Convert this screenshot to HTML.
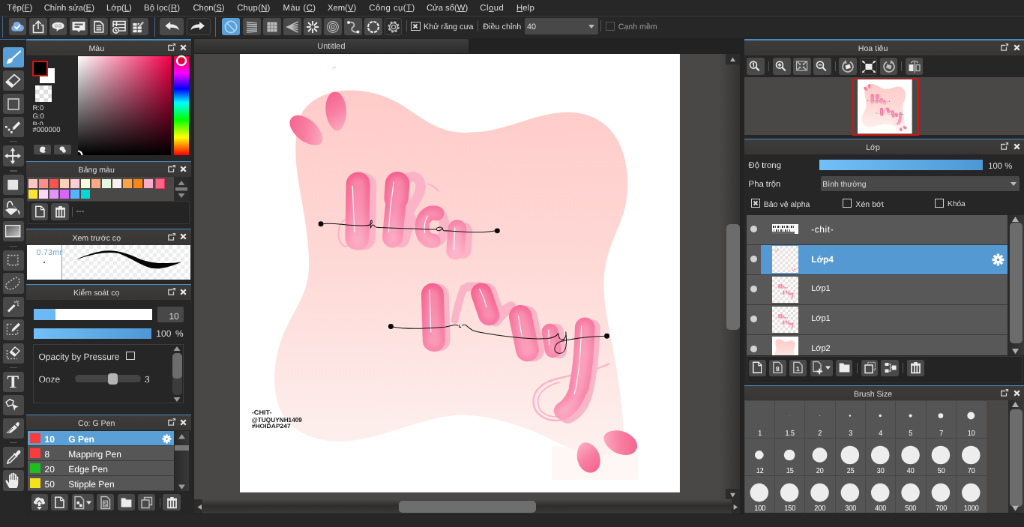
<!DOCTYPE html>
<html lang="vi"><head><meta charset="utf-8"><title>MediBang Paint Pro</title>
<style>
html,body{margin:0;padding:0;background:#252525;overflow:hidden;width:1024px;height:527px}
#app{position:absolute;left:0;top:0;width:1366px;height:703px;transform:scale(0.749633);transform-origin:0 0;will-change:transform;background:#252525;font-family:"Liberation Sans","DejaVu Sans",sans-serif;font-size:11px;color:#dcdcdc;overflow:hidden;text-rendering:geometricPrecision}
#app div{position:absolute;box-sizing:border-box}
#app svg{position:absolute;overflow:visible}
.t{white-space:nowrap;line-height:1}
u{text-decoration:underline}

.btn{background:#494949;border-radius:3px}
.hdr{background:linear-gradient(#3d3c3b,#373635)}
.bl{background:#4a8cc0}
.ic{fill:none;stroke:#e6e6e6;stroke-width:1.5}
.b{font-weight:bold}

</style></head><body>
<div id="app">
<svg width="0" height="0" style="left:0;top:0"><defs>
<linearGradient id="gb" x1="0" y1="0" x2="0" y2="1"><stop offset="0" stop-color="#ffcbc9"/><stop offset="0.45" stop-color="#fed8d5"/><stop offset="1" stop-color="#fdf1ef"/></linearGradient>
<linearGradient id="gp" x1="0" y1="0" x2="1" y2="1"><stop offset="0" stop-color="#f4608c"/><stop offset="1" stop-color="#fb96b2"/></linearGradient>
<linearGradient id="gl" x1="0" y1="0" x2="0" y2="1"><stop offset="0" stop-color="#f4709a"/><stop offset="0.55" stop-color="#f67ea4"/><stop offset="1" stop-color="#fba6c0"/></linearGradient>
<linearGradient id="gl1" gradientUnits="userSpaceOnUse" x1="0" y1="172" x2="0" y2="262"><stop offset="0" stop-color="#f5628f"/><stop offset="0.4" stop-color="#f7769f"/><stop offset="0.75" stop-color="#fa98b6"/><stop offset="1" stop-color="#fcbacd"/></linearGradient>
<linearGradient id="gl2" gradientUnits="userSpaceOnUse" x1="0" y1="283" x2="0" y2="424"><stop offset="0" stop-color="#f5628f"/><stop offset="0.25" stop-color="#f7769f"/><stop offset="0.5" stop-color="#f98aad"/><stop offset="0.8" stop-color="#f985aa"/><stop offset="1" stop-color="#fbaac2"/></linearGradient>
<linearGradient id="gtool" x1="0" y1="0" x2="1" y2="1"><stop offset="0" stop-color="#555"/><stop offset="1" stop-color="#cfcfcf"/></linearGradient>
<linearGradient id="gp2" x1="0.3" y1="0" x2="0.6" y2="1"><stop offset="0" stop-color="#f5648f"/><stop offset="0.5" stop-color="#f87ea2"/><stop offset="1" stop-color="#fbaac0"/></linearGradient>
<filter id="fblur" x="-20%" y="-20%" width="140%" height="140%"><feGaussianBlur stdDeviation="2.2"/></filter>
</defs>
</svg>
<div style="left:0px;top:0px;width:1366px;height:20.81px;background:#272727"></div>
<div class="t" style="left:9.34px;top:6.27px;font-size:11.3px;color:#dedede;letter-spacing:0px">Tệp(<u>F</u>)</div>
<div class="t" style="left:58.7px;top:6.27px;font-size:11.3px;color:#dedede;letter-spacing:0px">Chỉnh sửa(<u>E</u>)</div>
<div class="t" style="left:142.07px;top:6.27px;font-size:11.3px;color:#dedede;letter-spacing:0px">Lớp(<u>L</u>)</div>
<div class="t" style="left:192.09px;top:6.27px;font-size:11.3px;color:#dedede;letter-spacing:0.1px">Bộ lọc(<u>R</u>)</div>
<div class="t" style="left:257.46px;top:6.27px;font-size:11.3px;color:#dedede;letter-spacing:0px">Chọn(<u>S</u>)</div>
<div class="t" style="left:316.15px;top:6.27px;font-size:11.3px;color:#dedede;letter-spacing:0.25px">Chụp(<u>N</u>)</div>
<div class="t" style="left:377.52px;top:6.27px;font-size:11.3px;color:#dedede;letter-spacing:0.45px">Màu (<u>C</u>)</div>
<div class="t" style="left:436.88px;top:6.27px;font-size:11.3px;color:#dedede;letter-spacing:0px">Xem(<u>V</u>)</div>
<div class="t" style="left:492.24px;top:6.27px;font-size:11.3px;color:#dedede;letter-spacing:0.5px">Công cụ(<u>T</u>)</div>
<div class="t" style="left:568.94px;top:6.27px;font-size:11.3px;color:#dedede;letter-spacing:0px">Cửa sổ(<u>W</u>)</div>
<div class="t" style="left:640.31px;top:6.27px;font-size:11.3px;color:#dedede;letter-spacing:0.5px">Cl<u>o</u>ud</div>
<div class="t" style="left:689px;top:6.27px;font-size:11.3px;color:#dedede;letter-spacing:0.2px"><u>H</u>elp</div>
<div style="left:0px;top:20.81px;width:1366px;height:1.07px;background:#3a3a3a"></div>
<div style="left:0px;top:21.88px;width:1366px;height:29.35px;background:#272727"></div>
<div style="left:3.2px;top:22.14px;width:1.2px;height:28.01px;background:#3f6c94"></div>
<div class="btn" style="left:12.01px;top:24.01px;width:23.48px;height:23.48px;"></div>
<div class="btn" style="left:39.09px;top:24.01px;width:23.48px;height:23.48px;"></div>
<div class="btn" style="left:66.03px;top:24.01px;width:23.48px;height:23.48px;"></div>
<div class="btn" style="left:93.11px;top:24.01px;width:23.48px;height:23.48px;"></div>
<div class="btn" style="left:120.06px;top:24.01px;width:23.48px;height:23.48px;"></div>
<div class="btn" style="left:147.14px;top:24.01px;width:23.48px;height:23.48px;"></div>
<div class="btn" style="left:174.08px;top:24.01px;width:23.48px;height:23.48px;"></div>
<div style="left:205.83px;top:23.34px;width:1.2px;height:26.01px;background:#3f6c94"></div>
<div class="btn" style="left:213.44px;top:24.01px;width:32.02px;height:23.48px;"></div>
<div class="btn" style="left:249.46px;top:24.01px;width:31.35px;height:23.48px;background:#2a2a2a;border:1px solid #454545"></div>
<div style="left:287.21px;top:23.34px;width:1.2px;height:26.01px;background:#3f6c94"></div>
<div class="btn" style="left:296.14px;top:24.01px;width:24.01px;height:23.48px;background:#5aa0d8"></div>
<div class="btn" style="left:324.16px;top:24.01px;width:23.48px;height:23.48px;"></div>
<div class="btn" style="left:351.17px;top:24.01px;width:23.48px;height:23.48px;"></div>
<div class="btn" style="left:378.18px;top:24.01px;width:23.48px;height:23.48px;"></div>
<div class="btn" style="left:405.2px;top:24.01px;width:23.48px;height:23.48px;"></div>
<div class="btn" style="left:432.21px;top:24.01px;width:23.48px;height:23.48px;"></div>
<div class="btn" style="left:459.22px;top:24.01px;width:23.48px;height:23.48px;"></div>
<div class="btn" style="left:486.24px;top:24.01px;width:23.48px;height:23.48px;"></div>
<div class="btn" style="left:513.32px;top:24.01px;width:22.94px;height:23.48px;background:#2a2a2a;border:1px solid #454545"></div>
<div style="left:541.6px;top:27.35px;width:1.07px;height:14.67px;background:#555"></div>
<div style="left:548.27px;top:28.68px;width:12.27px;height:12.27px;border:1px solid #d0d0d0"><svg width="12" height="12" viewBox="0 0 12 12" style="left:-1px;top:-1px"><path d="M3.5 3.5L8.5 8.5M8.5 3.5L3.5 8.5" stroke="#e0e0e0" stroke-width="1.8"/></svg></div>
<div class="t" style="left:564.94px;top:30.68px;font-size:10.8px">Khử răng cưa</div>
<div style="left:636.98px;top:27.35px;width:1.07px;height:14.67px;background:#555"></div>
<div class="t" style="left:644.31px;top:30.68px;font-size:10.8px">Điều chỉnh</div>
<div style="left:699.67px;top:24.28px;width:98.05px;height:22.01px;background:#484848;border-radius:2px"></div>
<div class="t" style="left:703.01px;top:30.68px;font-size:10.8px">40</div>
<svg style="left:785.05px;top:32.68px" width="8" height="5" viewBox="0 0 8 5"><path d="M0 0H8L4 5Z" fill="#bdbdbd"/></svg>
<div style="left:801.06px;top:27.35px;width:1.07px;height:14.67px;background:#555"></div>
<div style="left:808.39px;top:29.35px;width:11.47px;height:11.47px;border:1px solid #555"></div>
<div class="t" style="left:824.8px;top:30.68px;font-size:10.6px;color:#9a9a9a">Cạnh mềm</div>
<div style="left:0px;top:52.03px;width:34.02px;height:634.98px;background:#272727"></div>
<div style="left:0px;top:52.29px;width:34.02px;height:1.07px;background:#3f6c94"></div>
<div class="btn" style="left:4px;top:62.7px;width:28.01px;height:27.48px;background:#5aa0d8"></div>
<div class="btn" style="left:4px;top:93.65px;width:28.01px;height:27.48px;"></div>
<div class="btn" style="left:4px;top:124.73px;width:28.01px;height:27.48px;"></div>
<div class="btn" style="left:4px;top:155.68px;width:28.01px;height:27.48px;"></div>
<div class="btn" style="left:4px;top:194.09px;width:28.01px;height:27.48px;"></div>
<div class="btn" style="left:4px;top:232.78px;width:28.01px;height:27.48px;"></div>
<div class="btn" style="left:4px;top:263.73px;width:28.01px;height:27.48px;"></div>
<div class="btn" style="left:4px;top:294.81px;width:28.01px;height:27.48px;"></div>
<div class="btn" style="left:4px;top:333.5px;width:28.01px;height:27.48px;"></div>
<div class="btn" style="left:4px;top:364.44px;width:28.01px;height:27.48px;"></div>
<div class="btn" style="left:4px;top:395.53px;width:28.01px;height:27.48px;"></div>
<div class="btn" style="left:4px;top:426.47px;width:28.01px;height:27.48px;"></div>
<div class="btn" style="left:4px;top:457.82px;width:28.01px;height:27.48px;"></div>
<div class="btn" style="left:4px;top:495.71px;width:28.01px;height:27.48px;"></div>
<div class="btn" style="left:4px;top:526.66px;width:28.01px;height:27.48px;"></div>
<div class="btn" style="left:4px;top:557.87px;width:28.01px;height:27.48px;"></div>
<div class="btn" style="left:4px;top:596.29px;width:28.01px;height:27.48px;"></div>
<div class="btn" style="left:4px;top:627.37px;width:28.01px;height:27.48px;"></div>
<div style="left:13.34px;top:188.09px;width:9.34px;height:1.07px;background:#555"></div>
<div style="left:13.34px;top:227.44px;width:9.34px;height:1.07px;background:#555"></div>
<div style="left:13.34px;top:327.89px;width:9.34px;height:1.07px;background:#555"></div>
<div style="left:13.34px;top:489.97px;width:9.34px;height:1.07px;background:#555"></div>
<div style="left:13.34px;top:590.42px;width:9.34px;height:1.07px;background:#555"></div>
<div style="left:34.95px;top:52.03px;width:219.57px;height:632.31px;background:#262626"></div>
<div class="bl" style="left:34.95px;top:52.43px;width:219.57px;height:1.2px;"></div>
<div class="hdr" style="left:34.95px;top:53.63px;width:219.57px;height:20.28px;"></div>
<div class="t" style="left:48.69px;top:59.9px;width:160.08px;text-align:center;font-size:10.6px;color:#dadada">Màu</div>
<svg style="left:223.58px;top:58.03px" width="10" height="10" viewBox="0 0 10 10"><path d="M6 2.5H0.8V9.2H7.5V5" fill="none" stroke="#cfcfcf" stroke-width="1.3"/><path d="M6.5 0.5H9.5V3.5M9.5 0.5L6.8 3.2" fill="none" stroke="#cfcfcf" stroke-width="1.2"/></svg>
<svg style="left:240.38px;top:58.56px" width="9" height="9" viewBox="0 0 9 9"><path d="M1.2 1.2L7.8 7.8M7.8 1.2L1.2 7.8" fill="none" stroke="#e8e8e8" stroke-width="2.3"/></svg>
<div style="left:52.83px;top:90.71px;width:20.28px;height:20.28px;background:#fff"></div>
<div style="left:42.69px;top:80.57px;width:21.08px;height:21.88px;background:#000;border:2.4px solid #d81414"></div>
<div style="left:46.69px;top:113.92px;width:22.68px;height:22.41px;background:#fff;background-image:linear-gradient(45deg,#dcdcdc 25%,transparent 25%,transparent 75%,#dcdcdc 75%),linear-gradient(45deg,#dcdcdc 25%,transparent 25%,transparent 75%,#dcdcdc 75%);background-size:11.4px 11.4px;background-position:0 0,5.7px 5.7px"></div>
<div class="t" style="left:43.49px;top:140.07px;font-size:9.5px;color:#d8d8d8">R:0</div>
<div class="t" style="left:43.49px;top:151.01px;font-size:9.5px;color:#d8d8d8">G:0</div>
<div class="t" style="left:43.49px;top:161.95px;font-size:9.5px;color:#d8d8d8">B:0</div>
<div class="t" style="left:43.49px;top:166.88px;font-size:9.5px;color:#d8d8d8;background:#262626;padding-top:2.2px">#000000</div>
<div style="left:45.36px;top:193.43px;width:22.68px;height:12.81px;background:#4a4a4a;border-radius:2px"></div>
<div style="left:72.04px;top:193.43px;width:23.34px;height:12.81px;background:#4a4a4a;border-radius:2px"></div>
<div style="left:103.78px;top:74.7px;width:124.59px;height:132.6px;background:linear-gradient(to bottom,rgba(0,0,0,0),#000),linear-gradient(to right,#fff,#f5004a)"></div>
<div style="left:231.85px;top:74.7px;width:20.01px;height:132.6px;background:linear-gradient(to bottom,#ff0030 0%,#ff00ff 17%,#0000ff 33%,#00ffff 47%,#00ff00 64%,#ffff00 82%,#ff8000 91%,#ff0000 100%)"></div>
<svg style="left:234.11px;top:73.37px" width="16" height="16" viewBox="0 0 16 16"><circle cx="8" cy="8" r="6" fill="#e8003c" stroke="#fff" stroke-width="2.4"/></svg>
<svg style="left:103.78px;top:200.36px" width="9" height="9" viewBox="0 0 9 9"><path d="M0 1.5A5.5 5.5 0 0 1 5.5 7" fill="none" stroke="#fff" stroke-width="2.2"/></svg>
<div class="bl" style="left:34.95px;top:214.77px;width:219.57px;height:1.2px;"></div>
<div class="hdr" style="left:34.95px;top:215.97px;width:219.57px;height:20.28px;"></div>
<div class="t" style="left:48.69px;top:222.24px;width:160.08px;text-align:center;font-size:10.6px;color:#dadada">Bảng màu</div>
<svg style="left:223.58px;top:220.37px" width="10" height="10" viewBox="0 0 10 10"><path d="M6 2.5H0.8V9.2H7.5V5" fill="none" stroke="#cfcfcf" stroke-width="1.3"/><path d="M6.5 0.5H9.5V3.5M9.5 0.5L6.8 3.2" fill="none" stroke="#cfcfcf" stroke-width="1.2"/></svg>
<svg style="left:240.38px;top:220.91px" width="9" height="9" viewBox="0 0 9 9"><path d="M1.2 1.2L7.8 7.8M7.8 1.2L1.2 7.8" fill="none" stroke="#e8e8e8" stroke-width="2.3"/></svg>
<div style="left:36.02px;top:236.12px;width:196.1px;height:31.48px;background:#4a4846"></div>
<div style="left:38.42px;top:238.78px;width:12.01px;height:12.01px;background:#ffc6c4"></div>
<div style="left:52.43px;top:238.78px;width:12.01px;height:12.01px;background:#ff8e88"></div>
<div style="left:66.43px;top:238.78px;width:12.01px;height:12.01px;background:#fb5450"></div>
<div style="left:80.44px;top:238.78px;width:12.01px;height:12.01px;background:#ffd3ba"></div>
<div style="left:94.45px;top:238.78px;width:12.01px;height:12.01px;background:#ffcdd6"></div>
<div style="left:108.45px;top:238.78px;width:12.01px;height:12.01px;background:#f9fbdc"></div>
<div style="left:122.46px;top:238.78px;width:12.01px;height:12.01px;background:#ffa888"></div>
<div style="left:136.47px;top:238.78px;width:12.01px;height:12.01px;background:#e2fbe0"></div>
<div style="left:150.47px;top:238.78px;width:12.01px;height:12.01px;background:#fdeeee"></div>
<div style="left:164.48px;top:238.78px;width:12.01px;height:12.01px;background:#ffa444"></div>
<div style="left:178.49px;top:238.78px;width:12.01px;height:12.01px;background:#ff8410"></div>
<div style="left:192.49px;top:238.78px;width:12.01px;height:12.01px;background:#ffaac8"></div>
<div style="left:206.77px;top:238.25px;width:13.34px;height:13.34px;background:#ff6484;border:1.6px solid #ea2c5c"></div>
<div style="left:38.42px;top:253.19px;width:12.01px;height:12.01px;background:#ffe234"></div>
<div style="left:52.43px;top:253.19px;width:12.01px;height:12.01px;background:#fbd8ff"></div>
<div style="left:66.43px;top:253.19px;width:12.01px;height:12.01px;background:#e294f8"></div>
<div style="left:80.44px;top:253.19px;width:12.01px;height:12.01px;background:#d964f8"></div>
<div style="left:94.45px;top:253.19px;width:12.01px;height:12.01px;background:#54b2ff"></div>
<div style="left:108.45px;top:253.19px;width:12.01px;height:12.01px;background:#04d8d6"></div>
<div style="left:232.11px;top:236.12px;width:20.01px;height:31.48px;background:#2b2b2b"></div>
<svg style="left:232.11px;top:236.12px" width="20" height="32" viewBox="0 0 20 32"><path d="M10 5L14.5 11H5.5Z" fill="#8a8a8a"/><rect x="2" y="14" width="16" height="4.5" fill="#7a7a7a"/><path d="M10 28L14.5 22H5.5Z" fill="#8a8a8a"/></svg>
<div style="left:36.68px;top:267.86px;width:216.11px;height:31.22px;border:1px solid #363636;background:#242424"></div>
<div class="btn" style="left:41.62px;top:270.8px;width:22.14px;height:23.48px;"></div>
<div class="btn" style="left:68.3px;top:270.8px;width:23.48px;height:23.48px;"></div>
<div style="left:96.05px;top:276.13px;width:1.07px;height:13.34px;background:#555"></div>
<div class="t" style="left:101.38px;top:276.8px;font-size:11px;color:#bbb">---</div>
<div class="bl" style="left:34.95px;top:305.22px;width:219.57px;height:1.2px;"></div>
<div class="hdr" style="left:34.95px;top:306.42px;width:219.57px;height:20.28px;"></div>
<div class="t" style="left:48.69px;top:312.69px;width:160.08px;text-align:center;font-size:10.6px;color:#dadada">Xem trước cọ</div>
<svg style="left:223.58px;top:310.82px" width="10" height="10" viewBox="0 0 10 10"><path d="M6 2.5H0.8V9.2H7.5V5" fill="none" stroke="#cfcfcf" stroke-width="1.3"/><path d="M6.5 0.5H9.5V3.5M9.5 0.5L6.8 3.2" fill="none" stroke="#cfcfcf" stroke-width="1.2"/></svg>
<svg style="left:240.38px;top:311.35px" width="9" height="9" viewBox="0 0 9 9"><path d="M1.2 1.2L7.8 7.8M7.8 1.2L1.2 7.8" fill="none" stroke="#e8e8e8" stroke-width="2.3"/></svg>
<div style="left:36.02px;top:326.83px;width:217.71px;height:45.89px;background:#fff"></div>
<div style="left:82.17px;top:326.83px;width:171.28px;height:45.89px;background:#fff;background-image:linear-gradient(45deg,#ebebeb 25%,transparent 25%,transparent 75%,#ebebeb 75%),linear-gradient(45deg,#ebebeb 25%,transparent 25%,transparent 75%,#ebebeb 75%);background-size:10.6px 10.6px;background-position:0 0,5.3px 5.3px"></div>
<div style="left:81.64px;top:326.83px;width:1.07px;height:45.89px;background:#999"></div>
<div style="left:36.02px;top:326.83px;width:45.62px;height:45.89px;overflow:hidden"><div class="t" style="left:12.6px;top:5px;font-size:10.5px;color:#6aa6dc;letter-spacing:0.3px">0.73mm</div></div>
<div style="left:57.63px;top:348.7px;width:2.27px;height:2.27px;background:#222;border-radius:50%"></div>
<svg style="left:81.37px;top:325.49px" width="173.42" height="48.02" viewBox="61 244 130 36"><path d="M76 260.2 C88 254.5 99 251.3 109 251 C119 251 129 254.3 140 259.3 C150 263.3 162 264.6 182 262.3 C170 267.3 160 270 152 268.6 C143 266.6 131 258.4 119 253.8 C108 251.8 95 253.6 76 260.2Z" fill="#050505"/></svg>
<div class="bl" style="left:34.95px;top:378.85px;width:219.57px;height:1.2px;"></div>
<div class="hdr" style="left:34.95px;top:380.05px;width:219.57px;height:20.28px;"></div>
<div class="t" style="left:48.69px;top:386.32px;width:160.08px;text-align:center;font-size:10.6px;color:#dadada">Kiểm soát cọ</div>
<svg style="left:223.58px;top:384.45px" width="10" height="10" viewBox="0 0 10 10"><path d="M6 2.5H0.8V9.2H7.5V5" fill="none" stroke="#cfcfcf" stroke-width="1.3"/><path d="M6.5 0.5H9.5V3.5M9.5 0.5L6.8 3.2" fill="none" stroke="#cfcfcf" stroke-width="1.2"/></svg>
<svg style="left:240.38px;top:384.99px" width="9" height="9" viewBox="0 0 9 9"><path d="M1.2 1.2L7.8 7.8M7.8 1.2L1.2 7.8" fill="none" stroke="#e8e8e8" stroke-width="2.3"/></svg>
<div style="left:44.96px;top:412.2px;width:158.21px;height:14.41px;background:#fff"></div>
<div style="left:44.96px;top:412.2px;width:28.81px;height:14.41px;background:#6db9f5"></div>
<div style="left:209.7px;top:409px;width:35.22px;height:20.81px;background:#484848;border-radius:2px"></div>
<div class="t" style="left:209.7px;top:416.47px;width:29.08px;text-align:right;font-size:12px">10</div>
<div style="left:44.96px;top:437.55px;width:156.88px;height:14.14px;background:linear-gradient(to right,#72c0fa,#4d98d4)"></div>
<div class="t" style="left:208.37px;top:439.15px;font-size:12px;word-spacing:2.4px">100 %</div>
<div style="left:44.42px;top:459.42px;width:200.1px;height:78.44px;border:1px solid #3c3c3c"></div>
<div class="t" style="left:51.49px;top:469.96px;font-size:12px">Opacity by Pressure</div>
<div style="left:168.48px;top:469.03px;width:11.21px;height:11.21px;border:1.2px solid #d8d8d8"></div>
<div class="t" style="left:51.49px;top:500.38px;font-size:12px">Ooze</div>
<div style="left:100.32px;top:500.24px;width:88.04px;height:9.87px;background:#444;border-radius:5px"></div>
<div style="left:143.8px;top:498.11px;width:13.34px;height:14.41px;background:#b4b4b4;border-radius:4px"></div>
<div class="t" style="left:192.89px;top:500.38px;font-size:12px">3</div>
<div style="left:229.71px;top:471.43px;width:13.07px;height:55.23px;background:#3c3c3c;border-radius:5px"></div>
<div style="left:229.71px;top:471.43px;width:13.07px;height:33.62px;background:#6c6c6c;border-radius:5px"></div>
<svg style="left:229.18px;top:461.03px" width="14" height="76" viewBox="0 0 14 76"><path d="M7 1L11.5 7H2.5Z" fill="#9a9a9a"/><path d="M7 75L11.5 69H2.5Z" fill="#9a9a9a"/></svg>
<div class="bl" style="left:34.95px;top:552.8px;width:219.57px;height:1.2px;"></div>
<div class="hdr" style="left:34.95px;top:554px;width:219.57px;height:20.28px;"></div>
<div class="t" style="left:48.69px;top:560.27px;width:160.08px;text-align:center;font-size:10.6px;color:#dadada">Cọ: G Pen</div>
<svg style="left:223.58px;top:558.41px" width="10" height="10" viewBox="0 0 10 10"><path d="M6 2.5H0.8V9.2H7.5V5" fill="none" stroke="#cfcfcf" stroke-width="1.3"/><path d="M6.5 0.5H9.5V3.5M9.5 0.5L6.8 3.2" fill="none" stroke="#cfcfcf" stroke-width="1.2"/></svg>
<svg style="left:240.38px;top:558.94px" width="9" height="9" viewBox="0 0 9 9"><path d="M1.2 1.2L7.8 7.8M7.8 1.2L1.2 7.8" fill="none" stroke="#e8e8e8" stroke-width="2.3"/></svg>
<div style="left:36.82px;top:574.95px;width:195.03px;height:80.04px;background:#3c3c3c"></div>
<div style="left:36.82px;top:574.95px;width:195.03px;height:19.34px;background:#5a9fd6"></div>
<div style="left:40.29px;top:578.42px;width:13.34px;height:12.81px;background:#f83c3c"></div>
<div class="t" style="left:59.5px;top:579.88px;font-size:12px;color:#fff;font-weight:bold">10</div>
<div class="t" style="left:91.24px;top:579.88px;font-size:12px;color:#fff;font-weight:bold">G Pen</div>
<div style="left:36.82px;top:594.96px;width:195.03px;height:19.34px;background:#565656"></div>
<div style="left:40.29px;top:598.43px;width:13.34px;height:12.81px;background:#f83c3c"></div>
<div class="t" style="left:59.5px;top:599.89px;font-size:12px;color:#fff">8</div>
<div class="t" style="left:91.24px;top:599.89px;font-size:12px;color:#fff">Mapping Pen</div>
<div style="left:36.82px;top:614.97px;width:195.03px;height:19.34px;background:#565656"></div>
<div style="left:40.29px;top:618.44px;width:13.34px;height:12.81px;background:#1ebe1e"></div>
<div class="t" style="left:59.5px;top:619.9px;font-size:12px;color:#fff">20</div>
<div class="t" style="left:91.24px;top:619.9px;font-size:12px;color:#fff">Edge Pen</div>
<div style="left:36.82px;top:634.98px;width:195.03px;height:19.34px;background:#565656"></div>
<div style="left:40.29px;top:638.44px;width:13.34px;height:12.81px;background:#f5e11e"></div>
<div class="t" style="left:59.5px;top:639.91px;font-size:12px;color:#fff">50</div>
<div class="t" style="left:91.24px;top:639.91px;font-size:12px;color:#fff">Stipple Pen</div>
<svg style="left:215.84px;top:578.55px" width="13" height="13" viewBox="-6.5 -6.5 13 13"><g stroke="#fff" stroke-width="2.6"><path d="M0-6V6M-6 0H6M-4.2-4.2L4.2 4.2M4.2-4.2L-4.2 4.2"/></g><circle r="3.8" fill="#fff"/><circle r="1.3" fill="#5a9fd6"/></svg>
<div style="left:232.91px;top:574.95px;width:19.21px;height:80.04px;background:linear-gradient(to right,#2a2a2a,#383838)"></div>
<div style="left:233.45px;top:594.16px;width:18.14px;height:6.67px;background:#777"></div>
<svg style="left:232.91px;top:575.61px" width="19" height="80" viewBox="0 0 19 80"><path d="M9.5 3L14 9.5H5Z" fill="#9a9a9a"/><path d="M9.5 77L14 70.5H5Z" fill="#9a9a9a"/></svg>
<div class="btn" style="left:41.62px;top:658.99px;width:22.14px;height:22.41px;"></div>
<div class="btn" style="left:68.3px;top:658.99px;width:22.94px;height:22.41px;"></div>
<div class="btn" style="left:95.65px;top:658.99px;width:29.08px;height:22.41px;"></div>
<div class="btn" style="left:129.4px;top:658.99px;width:22.94px;height:22.41px;"></div>
<div class="btn" style="left:156.74px;top:658.99px;width:22.94px;height:22.41px;"></div>
<div class="btn" style="left:183.96px;top:658.99px;width:22.94px;height:22.41px;"></div>
<div class="btn" style="left:217.44px;top:658.99px;width:23.48px;height:22.41px;"></div>
<div style="left:212.5px;top:663.66px;width:1.07px;height:13.34px;background:#555"></div>
<div style="left:258.53px;top:50.69px;width:733.69px;height:634.98px;background:#222222"></div>
<div style="left:258.53px;top:52.03px;width:366.05px;height:19.48px;background:linear-gradient(#3f3e3d,#2c2c2c);border-radius:2px 2px 0 0"></div>
<div class="t" style="left:258.53px;top:56.83px;width:366.85px;text-align:center;font-size:11px;color:#d0d0d0">Untitled</div>
<div style="left:258.53px;top:71.77px;width:709.95px;height:594.42px;background:#4a4846"></div>
<div style="left:959.13px;top:71.77px;width:28.01px;height:594.42px;background:linear-gradient(to right,#4a4846,#403f3d 45%,#333231)"></div>
<div style="left:968.47px;top:71.77px;width:18.68px;height:13.87px;background:#2b2b2b"></div>
<div style="left:968.47px;top:652.32px;width:18.68px;height:14.14px;background:#2b2b2b"></div>
<div style="left:969.01px;top:299.48px;width:17.61px;height:140.74px;background:#6c6c6c;border-radius:5px"></div>
<svg style="left:968.47px;top:72.04px" width="19" height="594.42" viewBox="0 0 19 590" preserveAspectRatio="none"><path d="M9.5 4.5L13 10H6Z" fill="#b0b0b0"/><path d="M9.5 587L13 581.5H6Z" fill="#b0b0b0"/></svg>
<div style="left:258.53px;top:666.46px;width:728.62px;height:18.94px;background:linear-gradient(#4a4846,#2e2d2c 45%,#3a3938)"></div>
<div style="left:975.94px;top:666.46px;width:11.21px;height:18.94px;background:#2b2b2b"></div>
<div style="left:258.53px;top:666.46px;width:11.21px;height:18.94px;background:#2b2b2b"></div>
<div style="left:531.99px;top:667.53px;width:183.29px;height:16.27px;background:#6e6e6e;border-radius:5px"></div>
<svg style="left:258.53px;top:666.46px" width="728.62" height="19" viewBox="0 0 729 19" preserveAspectRatio="none"><path d="M4.5 10.5L10 7V14Z" fill="#b0b0b0"/><path d="M725.5 10.5L720 7V14Z" fill="#b0b0b0"/></svg>
<svg style="left:320.16px;top:72.04px" width="586.95" height="584.82" viewBox="240 54 440 438.4"><rect x="240" y="54" width="440" height="438.4" fill="#fff"/>
<path d="M302 113 C308 102 324 92 344 90.5 C368 89 388 96 405 107 C420 117 436 130 458 132.3 C465 133 472 132.5 478 132 C505 130 528 117 556 113 C585 109 610 120 621 147 C630 170 630 196 622 218 C614 240 604 256 604 285 C604 315 614 345 619 385 C623 415 626 438 620 452 C600 458 575 452 548 438 C525 427 495 416 462 415 C425 416 390 436 350 441 C325 444 296 436 283 415 C272 396 272 366 282 338 C292 312 308 296 309 268 C310 230 298 190 296 160 C295 140 297 124 302 113Z" fill="url(#gb)"/>
<path d="M552 446 L638 452 L638 480 L552 480Z" fill="#fdf1ef" opacity="0.6"/>
<g>
<path d="M0 -1 C0.6 -1 1 -0.5 0.93 0.1 C0.82 0.66 0.36 1 0 1 C-0.36 1 -0.82 0.66 -0.93 0.1 C-1 -0.5 -0.6 -1 0 -1Z" transform="translate(306.5 130.5) rotate(-50) scale(11.5 19.5)" fill="url(#gp2)"/>
<path d="M0 -1 C0.6 -1 1 -0.5 0.93 0.1 C0.82 0.66 0.36 1 0 1 C-0.36 1 -0.82 0.66 -0.93 0.1 C-1 -0.5 -0.6 -1 0 -1Z" transform="translate(336.2 111.4) rotate(-4) scale(11 19.5)" fill="url(#gp2)"/>
<path d="M0 -1 C0.6 -1 1 -0.5 0.93 0.1 C0.82 0.66 0.36 1 0 1 C-0.36 1 -0.82 0.66 -0.93 0.1 C-1 -0.5 -0.6 -1 0 -1Z" transform="translate(588.5 457.5) rotate(162) scale(12 15.5)" fill="url(#gp2)"/>
<path d="M0 -1 C0.6 -1 1 -0.5 0.93 0.1 C0.82 0.66 0.36 1 0 1 C-0.36 1 -0.82 0.66 -0.93 0.1 C-1 -0.5 -0.6 -1 0 -1Z" transform="translate(620.5 442.5) rotate(112) scale(12 17.5)" fill="url(#gp2)"/>
<path d="M332.5 68.2 L336 67" stroke="#f8b0c0" stroke-width="0.8" fill="none"/>
</g>
<g fill="none" stroke-linecap="round" stroke-linejoin="round">
<g stroke="#fab0c6" opacity="0.9">
<path d="M364.5 185 L363.5 238" stroke-width="24"/>
<path d="M346 219 C337 224 336 241 344 246 C349 248 352 243 354 237" stroke-width="1.6"/>
<path d="M404 181 C414 171 425 180 419 194 C415 203 408 211 403 223" stroke-width="10"/>
<path d="M401 239 C403 232 405 226 408 220" stroke-width="17"/>
<path d="M440 213 C447 222 446 237 437 242" stroke-width="10"/>
<path d="M464 231 L463 250" stroke-width="17"/>
<path d="M428 184 C432 185 436 188 438.5 191" stroke-width="1.3"/>
</g>
<g stroke="url(#gl1)">
<path d="M358.2 184 L357.3 238.2" stroke-width="24"/>
<path d="M397.5 184 L396.5 198" stroke-width="24.5"/>
<path d="M396.5 198 C395 212 393.5 225 392.8 237.5" stroke-width="20.5"/>
<path d="M437 213.5 C427.5 210.5 421.8 219.5 422.3 228 C422.8 236.5 427 241.5 433.5 240.8" stroke-width="14.5"/>
<path d="M457.3 229 L455.6 250.5" stroke-width="18.5"/>
</g><g stroke="#ffffff" opacity="0.2" filter="url(#fblur)">
<path d="M358.2 184 L357.3 238.2" stroke-width="14.0"/>
<path d="M397.5 184 L396.5 198" stroke-width="14.5"/>
<path d="M396.5 198 C395 212 393.5 225 392.8 237.5" stroke-width="10.5"/>
<path d="M437 213.5 C427.5 210.5 421.8 219.5 422.3 228 C422.8 236.5 427 241.5 433.5 240.8" stroke-width="4.5"/>
<path d="M457.3 229 L455.6 250.5" stroke-width="8.5"/>
</g>
<g stroke="#fab0c6" opacity="0.9">
<path d="M438 295 L439.5 340" stroke-width="22"/>
<path d="M464 288 C460 298 457 309 455 320" stroke-width="7.5"/>
<path d="M468 287 L480 286.5" stroke-width="9"/>
<path d="M486.5 293.5 L494 315" stroke-width="21"/>
<path d="M496 321 C500 315 505 310 511 307" stroke-width="11"/>
<path d="M526 317 L533 350" stroke-width="23"/>
<path d="M556 331 L559.5 351" stroke-width="15"/>
<path d="M592 328 C591 350 589 375 584 394 C581 404 576 411 568 415" stroke-width="17"/>
<path d="M566 419 C550 424 534 416 533.5 402 C533 389 545 381 560 378 C578 374 596 370 609 364" stroke-width="1.8"/>
<path d="M562 416 C548 419 538 412 538 402 C538 392 548 385 560 382" stroke-width="1.4"/>
</g>
<g stroke="url(#gl2)">
<path d="M432.6 294.5 L434 340.5" stroke-width="22.5"/>
<path d="M481.5 293.5 L489 315" stroke-width="21"/>
<path d="M520.5 316.5 L527.5 350" stroke-width="23"/>
<path d="M550 332 L553 349.5" stroke-width="16.5"/>
<path d="M585 327.5 C584.5 345 583.5 368 579 387" stroke-width="20"/><path d="M579 387 C576 397.5 571 406 563 411" stroke-width="18"/>
</g><g stroke="#ffffff" opacity="0.2" filter="url(#fblur)">
<path d="M432.6 294.5 L434 340.5" stroke-width="12.5"/>
<path d="M481.5 293.5 L489 315" stroke-width="11.0"/>
<path d="M520.5 316.5 L527.5 350" stroke-width="13.0"/>
<path d="M550 332 L553 349.5" stroke-width="6.5"/>
<path d="M585 327.5 C584.5 345 583.5 368 579 387" stroke-width="10.0"/><path d="M579 387 C576 397.5 571 406 563 411" stroke-width="8.0"/>
</g>
<g stroke="#fff" stroke-width="0.9" opacity="0.95">
<path d="M352.6 186 L354.6 232"/><path d="M394 182 C391.5 198 389.5 216 388.8 232"/><path d="M428 216 C424.5 220 424 228 425 233"/><path d="M455 228 L454 249"/>
<path d="M429.6 290 L431 332"/><path d="M479.5 289 C482.5 294 485 301 486.5 307"/><path d="M518.5 316 L522 336"/><path d="M548.6 330 L549.4 345"/><path d="M581.5 326 C581 350 579.5 375 574.5 394"/>
</g>
<g stroke="#111" stroke-width="0.75">
<path d="M321 224 C336 222 350 227 366 225.5 C369 225.5 371 225 372 223 C372.5 220 371 219.5 370.5 222 C370.5 224 370.5 226.5 370.8 228 C371.5 225 373.5 224 374.5 226 C375 227.5 377 227.5 379 227.5 C398 228.5 420 229 436 229.5 C437 227 441 226.5 442.5 228.5 C441 231 437.5 231.5 436.5 229.5 M442.5 228 C442.5 230 443.5 231 446 230.8 C460 231.5 480 234 497 230.5"/>
<path d="M391 326.6 C410 330 430 328 445 327 C452 326 455 324 458 325.5 M459.5 325 C459 327 459.5 327.5 461 327 M462.5 325.5 C463.5 324.5 465.5 324.5 467 326 C470 329 473 331 478 332 C500 336 525 340 548 338.5 C552 338 556 337 558.5 333.5 C559 336 559 339.5 562 340 C565 340 566.5 336 566 332 C566.5 338 567.5 345 565 350 C563 354 558 354.5 555.5 351.5 C553.5 348 556 343 561 341.5 C575 338 592 336.5 607 336"/>
</g>
<g fill="#0a0a0a" stroke="none"><circle cx="321" cy="224" r="2.6"/><circle cx="497.4" cy="230.8" r="2.6"/><circle cx="391" cy="326.5" r="2.6"/><circle cx="607" cy="336" r="2.6"/></g>
</g>
<g font-family="Liberation Sans, sans-serif" font-weight="bold" font-size="6.4" fill="#151515">
<text x="251.8" y="414.8" textLength="20.2" lengthAdjust="spacingAndGlyphs">-CHIT-</text>
<text x="251.8" y="421.9" textLength="50.4" lengthAdjust="spacingAndGlyphs">@TUQUYNH1409</text>
<text x="251.8" y="428.1" textLength="39" lengthAdjust="spacingAndGlyphs" font-size="6">#HOIDAP247</text>
</g>
</svg>
<div style="left:993.02px;top:52.03px;width:372.98px;height:632.31px;background:#262626"></div>
<div class="bl" style="left:993.02px;top:52.43px;width:372.98px;height:1.2px;"></div>
<div class="hdr" style="left:993.02px;top:53.63px;width:372.98px;height:20.28px;"></div>
<div class="t" style="left:1084.53px;top:59.9px;width:160.08px;text-align:center;font-size:10.6px;color:#dadada">Hoa tiêu</div>
<svg style="left:1335.05px;top:58.03px" width="10" height="10" viewBox="0 0 10 10"><path d="M6 2.5H0.8V9.2H7.5V5" fill="none" stroke="#cfcfcf" stroke-width="1.3"/><path d="M6.5 0.5H9.5V3.5M9.5 0.5L6.8 3.2" fill="none" stroke="#cfcfcf" stroke-width="1.2"/></svg>
<svg style="left:1351.86px;top:58.56px" width="9" height="9" viewBox="0 0 9 9"><path d="M1.2 1.2L7.8 7.8M7.8 1.2L1.2 7.8" fill="none" stroke="#e8e8e8" stroke-width="2.3"/></svg>
<div class="btn" style="left:996.49px;top:77.37px;width:24.01px;height:22.94px;"></div>
<div class="btn" style="left:1030.9px;top:77.37px;width:23.74px;height:22.94px;"></div>
<div class="btn" style="left:1057.85px;top:77.37px;width:24.01px;height:22.94px;"></div>
<div class="btn" style="left:1085.33px;top:77.37px;width:23.48px;height:22.94px;"></div>
<div class="btn" style="left:1118.95px;top:77.37px;width:24.28px;height:22.94px;"></div>
<div class="btn" style="left:1146.96px;top:77.37px;width:23.21px;height:22.94px;background:#2a2a2a;border:1px solid #454545"></div>
<div class="btn" style="left:1173.91px;top:77.37px;width:23.21px;height:22.94px;"></div>
<div class="btn" style="left:1208.06px;top:77.37px;width:22.68px;height:22.94px;"></div>
<div style="left:1025.3px;top:82.04px;width:1.07px;height:13.34px;background:#555"></div>
<div style="left:1113.88px;top:82.04px;width:1.07px;height:13.34px;background:#555"></div>
<div style="left:1201.92px;top:82.04px;width:1.07px;height:13.34px;background:#555"></div>
<div style="left:993.02px;top:103.12px;width:372.98px;height:77.37px;background:#4a4846"></div>
<div style="left:1137.09px;top:104.58px;width:89.11px;height:76.57px;border:2.2px solid #d41414"></div>
<svg style="left:1143.22px;top:106.45px" width="74.7" height="72.3" viewBox="240 54 440 438.4"><rect x="240" y="54" width="440" height="438.4" fill="#fff"/>
<path d="M302 113 C308 102 324 92 344 90.5 C368 89 388 96 405 107 C420 117 436 130 458 132.3 C465 133 472 132.5 478 132 C505 130 528 117 556 113 C585 109 610 120 621 147 C630 170 630 196 622 218 C614 240 604 256 604 285 C604 315 614 345 619 385 C623 415 626 438 620 452 C600 458 575 452 548 438 C525 427 495 416 462 415 C425 416 390 436 350 441 C325 444 296 436 283 415 C272 396 272 366 282 338 C292 312 308 296 309 268 C310 230 298 190 296 160 C295 140 297 124 302 113Z" fill="url(#gb)"/>
<path d="M552 446 L638 452 L638 480 L552 480Z" fill="#fdf1ef" opacity="0.6"/>
<g>
<path d="M0 -1 C0.6 -1 1 -0.5 0.93 0.1 C0.82 0.66 0.36 1 0 1 C-0.36 1 -0.82 0.66 -0.93 0.1 C-1 -0.5 -0.6 -1 0 -1Z" transform="translate(306.5 130.5) rotate(-50) scale(11.5 19.5)" fill="url(#gp2)"/>
<path d="M0 -1 C0.6 -1 1 -0.5 0.93 0.1 C0.82 0.66 0.36 1 0 1 C-0.36 1 -0.82 0.66 -0.93 0.1 C-1 -0.5 -0.6 -1 0 -1Z" transform="translate(336.2 111.4) rotate(-4) scale(11 19.5)" fill="url(#gp2)"/>
<path d="M0 -1 C0.6 -1 1 -0.5 0.93 0.1 C0.82 0.66 0.36 1 0 1 C-0.36 1 -0.82 0.66 -0.93 0.1 C-1 -0.5 -0.6 -1 0 -1Z" transform="translate(588.5 457.5) rotate(162) scale(12 15.5)" fill="url(#gp2)"/>
<path d="M0 -1 C0.6 -1 1 -0.5 0.93 0.1 C0.82 0.66 0.36 1 0 1 C-0.36 1 -0.82 0.66 -0.93 0.1 C-1 -0.5 -0.6 -1 0 -1Z" transform="translate(620.5 442.5) rotate(112) scale(12 17.5)" fill="url(#gp2)"/>
<path d="M332.5 68.2 L336 67" stroke="#f8b0c0" stroke-width="0.8" fill="none"/>
</g>
<g fill="none" stroke-linecap="round" stroke-linejoin="round">
<g stroke="#fab0c6" opacity="0.9">
<path d="M364.5 185 L363.5 238" stroke-width="24"/>
<path d="M346 219 C337 224 336 241 344 246 C349 248 352 243 354 237" stroke-width="1.6"/>
<path d="M404 181 C414 171 425 180 419 194 C415 203 408 211 403 223" stroke-width="10"/>
<path d="M401 239 C403 232 405 226 408 220" stroke-width="17"/>
<path d="M440 213 C447 222 446 237 437 242" stroke-width="10"/>
<path d="M464 231 L463 250" stroke-width="17"/>
<path d="M428 184 C432 185 436 188 438.5 191" stroke-width="1.3"/>
</g>
<g stroke="url(#gl1)">
<path d="M358.2 184 L357.3 238.2" stroke-width="24"/>
<path d="M397.5 184 L396.5 198" stroke-width="24.5"/>
<path d="M396.5 198 C395 212 393.5 225 392.8 237.5" stroke-width="20.5"/>
<path d="M437 213.5 C427.5 210.5 421.8 219.5 422.3 228 C422.8 236.5 427 241.5 433.5 240.8" stroke-width="14.5"/>
<path d="M457.3 229 L455.6 250.5" stroke-width="18.5"/>
</g><g stroke="#ffffff" opacity="0.2" filter="url(#fblur)">
<path d="M358.2 184 L357.3 238.2" stroke-width="14.0"/>
<path d="M397.5 184 L396.5 198" stroke-width="14.5"/>
<path d="M396.5 198 C395 212 393.5 225 392.8 237.5" stroke-width="10.5"/>
<path d="M437 213.5 C427.5 210.5 421.8 219.5 422.3 228 C422.8 236.5 427 241.5 433.5 240.8" stroke-width="4.5"/>
<path d="M457.3 229 L455.6 250.5" stroke-width="8.5"/>
</g>
<g stroke="#fab0c6" opacity="0.9">
<path d="M438 295 L439.5 340" stroke-width="22"/>
<path d="M464 288 C460 298 457 309 455 320" stroke-width="7.5"/>
<path d="M468 287 L480 286.5" stroke-width="9"/>
<path d="M486.5 293.5 L494 315" stroke-width="21"/>
<path d="M496 321 C500 315 505 310 511 307" stroke-width="11"/>
<path d="M526 317 L533 350" stroke-width="23"/>
<path d="M556 331 L559.5 351" stroke-width="15"/>
<path d="M592 328 C591 350 589 375 584 394 C581 404 576 411 568 415" stroke-width="17"/>
<path d="M566 419 C550 424 534 416 533.5 402 C533 389 545 381 560 378 C578 374 596 370 609 364" stroke-width="1.8"/>
<path d="M562 416 C548 419 538 412 538 402 C538 392 548 385 560 382" stroke-width="1.4"/>
</g>
<g stroke="url(#gl2)">
<path d="M432.6 294.5 L434 340.5" stroke-width="22.5"/>
<path d="M481.5 293.5 L489 315" stroke-width="21"/>
<path d="M520.5 316.5 L527.5 350" stroke-width="23"/>
<path d="M550 332 L553 349.5" stroke-width="16.5"/>
<path d="M585 327.5 C584.5 345 583.5 368 579 387" stroke-width="20"/><path d="M579 387 C576 397.5 571 406 563 411" stroke-width="18"/>
</g><g stroke="#ffffff" opacity="0.2" filter="url(#fblur)">
<path d="M432.6 294.5 L434 340.5" stroke-width="12.5"/>
<path d="M481.5 293.5 L489 315" stroke-width="11.0"/>
<path d="M520.5 316.5 L527.5 350" stroke-width="13.0"/>
<path d="M550 332 L553 349.5" stroke-width="6.5"/>
<path d="M585 327.5 C584.5 345 583.5 368 579 387" stroke-width="10.0"/><path d="M579 387 C576 397.5 571 406 563 411" stroke-width="8.0"/>
</g>
<g stroke="#fff" stroke-width="0.9" opacity="0.95">
<path d="M352.6 186 L354.6 232"/><path d="M394 182 C391.5 198 389.5 216 388.8 232"/><path d="M428 216 C424.5 220 424 228 425 233"/><path d="M455 228 L454 249"/>
<path d="M429.6 290 L431 332"/><path d="M479.5 289 C482.5 294 485 301 486.5 307"/><path d="M518.5 316 L522 336"/><path d="M548.6 330 L549.4 345"/><path d="M581.5 326 C581 350 579.5 375 574.5 394"/>
</g>
<g stroke="#111" stroke-width="0.75">
<path d="M321 224 C336 222 350 227 366 225.5 C369 225.5 371 225 372 223 C372.5 220 371 219.5 370.5 222 C370.5 224 370.5 226.5 370.8 228 C371.5 225 373.5 224 374.5 226 C375 227.5 377 227.5 379 227.5 C398 228.5 420 229 436 229.5 C437 227 441 226.5 442.5 228.5 C441 231 437.5 231.5 436.5 229.5 M442.5 228 C442.5 230 443.5 231 446 230.8 C460 231.5 480 234 497 230.5"/>
<path d="M391 326.6 C410 330 430 328 445 327 C452 326 455 324 458 325.5 M459.5 325 C459 327 459.5 327.5 461 327 M462.5 325.5 C463.5 324.5 465.5 324.5 467 326 C470 329 473 331 478 332 C500 336 525 340 548 338.5 C552 338 556 337 558.5 333.5 C559 336 559 339.5 562 340 C565 340 566.5 336 566 332 C566.5 338 567.5 345 565 350 C563 354 558 354.5 555.5 351.5 C553.5 348 556 343 561 341.5 C575 338 592 336.5 607 336"/>
</g>
<g fill="#0a0a0a" stroke="none"><circle cx="321" cy="224" r="2.6"/><circle cx="497.4" cy="230.8" r="2.6"/><circle cx="391" cy="326.5" r="2.6"/><circle cx="607" cy="336" r="2.6"/></g>
</g>
</svg>
<div class="bl" style="left:993.02px;top:184.89px;width:372.98px;height:1.2px;"></div>
<div class="hdr" style="left:993.02px;top:186.09px;width:372.98px;height:20.28px;"></div>
<div class="t" style="left:1084.53px;top:192.36px;width:160.08px;text-align:center;font-size:10.6px;color:#dadada">Lớp</div>
<svg style="left:1335.05px;top:190.49px" width="10" height="10" viewBox="0 0 10 10"><path d="M6 2.5H0.8V9.2H7.5V5" fill="none" stroke="#cfcfcf" stroke-width="1.3"/><path d="M6.5 0.5H9.5V3.5M9.5 0.5L6.8 3.2" fill="none" stroke="#cfcfcf" stroke-width="1.2"/></svg>
<svg style="left:1351.86px;top:191.03px" width="9" height="9" viewBox="0 0 9 9"><path d="M1.2 1.2L7.8 7.8M7.8 1.2L1.2 7.8" fill="none" stroke="#e8e8e8" stroke-width="2.3"/></svg>
<div class="t" style="left:998.62px;top:216.37px;font-size:11.3px">Độ trong</div>
<div style="left:1093.07px;top:213.17px;width:218.24px;height:13.87px;background:linear-gradient(to right,#72c0fa,#4d98d4)"></div>
<div class="t" style="left:1318.24px;top:216.64px;font-size:11.3px">100 %</div>
<div class="t" style="left:998.62px;top:241.45px;font-size:11.3px">Pha trộn</div>
<div style="left:1095.2px;top:235.18px;width:265.2px;height:20.01px;background:#484848;border-radius:2px"></div>
<div class="t" style="left:1097.34px;top:241.72px;font-size:10.4px">Bình thường</div>
<svg style="left:1348.12px;top:242.79px" width="8" height="5" viewBox="0 0 8 5"><path d="M0 0H8L4 5Z" fill="#bdbdbd"/></svg>
<div style="left:1001.82px;top:265.46px;width:12.01px;height:12.01px;border:1px solid #d0d0d0"><svg width="12" height="12" viewBox="0 0 12 12" style="left:-1px;top:-1px"><path d="M3.5 3.5L8.5 8.5M8.5 3.5L3.5 8.5" stroke="#e0e0e0" stroke-width="1.8"/></svg></div>
<div class="t" style="left:1018.63px;top:267.86px;font-size:10.6px">Bảo vệ alpha</div>
<div style="left:1124.28px;top:265.46px;width:12.01px;height:12.01px;border:1px solid #d0d0d0"></div>
<div class="t" style="left:1141.36px;top:267.86px;font-size:10.6px">Xén bớt</div>
<div style="left:1247.28px;top:265.46px;width:12.01px;height:12.01px;border:1px solid #d0d0d0"></div>
<div class="t" style="left:1263.95px;top:267.86px;font-size:10.2px">Khóa</div>
<div class="ll" style="left:996.49px;top:286.54px;width:347.64px;height:187.29px;background:#3a3a3a;overflow:hidden"></div>
<div style="left:996.49px;top:286.54px;width:347.64px;height:39.35px;background:#585858"></div>
<div style="left:1000.76px;top:300.95px;width:9.07px;height:9.07px;background:#d2d2d2;border-radius:50%"></div>
<div style="left:1029.84px;top:298.81px;width:34.68px;height:12.81px;background:#fff;overflow:hidden"><div style="left:1px;top:2px;width:28px;height:3px;background:repeating-linear-gradient(90deg,#333 0 2px,#fff 2px 3px,#555 3px 4px,#fff 4px 6px)"></div><div style="left:2px;top:7px;width:22px;height:3px;background:repeating-linear-gradient(90deg,#777 0 1px,#fff 1px 3px,#444 3px 5px,#fff 5px 6px)"></div><div style="left:0;top:10.5px;width:30px;height:3px;background:#666"></div></div>
<div class="t" style="left:1082.13px;top:300.15px;color:#fff;font-size:12px;letter-spacing:0.6px">-chit-</div>
<div style="left:996.49px;top:326.63px;width:347.64px;height:39.35px;background:#585858"></div>
<div style="left:1014.63px;top:326.63px;width:329.49px;height:39.35px;background:#5599d2"></div>
<div style="left:1000.76px;top:341.03px;width:9.07px;height:9.07px;background:#d2d2d2;border-radius:50%"></div>
<div style="left:1029.84px;top:328.49px;width:34.68px;height:35.75px;background-color:#fff;background-image:linear-gradient(45deg,#e6dcdc 25%,transparent 25%,transparent 75%,#e6dcdc 75%),linear-gradient(45deg,#e6dcdc 25%,transparent 25%,transparent 75%,#e6dcdc 75%);background-size:7px 7px;background-position:0 0,3.5px 3.5px;overflow:hidden"><svg width="34.68" height="35.75" viewBox="240 54 440 438.4" style="left:0;top:0;opacity:0.8"><g>
<path d="M0 -1 C0.6 -1 1 -0.5 0.93 0.1 C0.82 0.66 0.36 1 0 1 C-0.36 1 -0.82 0.66 -0.93 0.1 C-1 -0.5 -0.6 -1 0 -1Z" transform="translate(306.5 130.5) rotate(-50) scale(11.5 19.5)" fill="url(#gp2)"/>
<path d="M0 -1 C0.6 -1 1 -0.5 0.93 0.1 C0.82 0.66 0.36 1 0 1 C-0.36 1 -0.82 0.66 -0.93 0.1 C-1 -0.5 -0.6 -1 0 -1Z" transform="translate(336.2 111.4) rotate(-4) scale(11 19.5)" fill="url(#gp2)"/>
<path d="M0 -1 C0.6 -1 1 -0.5 0.93 0.1 C0.82 0.66 0.36 1 0 1 C-0.36 1 -0.82 0.66 -0.93 0.1 C-1 -0.5 -0.6 -1 0 -1Z" transform="translate(588.5 457.5) rotate(162) scale(12 15.5)" fill="url(#gp2)"/>
<path d="M0 -1 C0.6 -1 1 -0.5 0.93 0.1 C0.82 0.66 0.36 1 0 1 C-0.36 1 -0.82 0.66 -0.93 0.1 C-1 -0.5 -0.6 -1 0 -1Z" transform="translate(620.5 442.5) rotate(112) scale(12 17.5)" fill="url(#gp2)"/>
<path d="M332.5 68.2 L336 67" stroke="#f8b0c0" stroke-width="0.8" fill="none"/>
</g>
</svg></div>
<div class="t" style="left:1082.13px;top:340.23px;color:#fff;font-weight:bold;font-size:12px">Lớp4</div>
<div style="left:996.49px;top:366.71px;width:347.64px;height:39.35px;background:#585858"></div>
<div style="left:1000.76px;top:381.12px;width:9.07px;height:9.07px;background:#d2d2d2;border-radius:50%"></div>
<div style="left:1029.84px;top:368.58px;width:34.68px;height:35.75px;background-color:#fff;background-image:linear-gradient(45deg,#e6dcdc 25%,transparent 25%,transparent 75%,#e6dcdc 75%),linear-gradient(45deg,#e6dcdc 25%,transparent 25%,transparent 75%,#e6dcdc 75%);background-size:7px 7px;background-position:0 0,3.5px 3.5px;overflow:hidden"><svg width="34.68" height="35.75" viewBox="240 54 440 438.4" style="left:0;top:0"><g fill="none" stroke-linecap="round" stroke-linejoin="round">
<g stroke="#fab0c6" opacity="0.9">
<path d="M364.5 185 L363.5 238" stroke-width="24"/>
<path d="M346 219 C337 224 336 241 344 246 C349 248 352 243 354 237" stroke-width="1.6"/>
<path d="M404 181 C414 171 425 180 419 194 C415 203 408 211 403 223" stroke-width="10"/>
<path d="M401 239 C403 232 405 226 408 220" stroke-width="17"/>
<path d="M440 213 C447 222 446 237 437 242" stroke-width="10"/>
<path d="M464 231 L463 250" stroke-width="17"/>
<path d="M428 184 C432 185 436 188 438.5 191" stroke-width="1.3"/>
</g>
<g stroke="url(#gl1)">
<path d="M358.2 184 L357.3 238.2" stroke-width="24"/>
<path d="M397.5 184 L396.5 198" stroke-width="24.5"/>
<path d="M396.5 198 C395 212 393.5 225 392.8 237.5" stroke-width="20.5"/>
<path d="M437 213.5 C427.5 210.5 421.8 219.5 422.3 228 C422.8 236.5 427 241.5 433.5 240.8" stroke-width="14.5"/>
<path d="M457.3 229 L455.6 250.5" stroke-width="18.5"/>
</g><g stroke="#ffffff" opacity="0.2" filter="url(#fblur)">
<path d="M358.2 184 L357.3 238.2" stroke-width="14.0"/>
<path d="M397.5 184 L396.5 198" stroke-width="14.5"/>
<path d="M396.5 198 C395 212 393.5 225 392.8 237.5" stroke-width="10.5"/>
<path d="M437 213.5 C427.5 210.5 421.8 219.5 422.3 228 C422.8 236.5 427 241.5 433.5 240.8" stroke-width="4.5"/>
<path d="M457.3 229 L455.6 250.5" stroke-width="8.5"/>
</g>
<g stroke="#fab0c6" opacity="0.9">
<path d="M438 295 L439.5 340" stroke-width="22"/>
<path d="M464 288 C460 298 457 309 455 320" stroke-width="7.5"/>
<path d="M468 287 L480 286.5" stroke-width="9"/>
<path d="M486.5 293.5 L494 315" stroke-width="21"/>
<path d="M496 321 C500 315 505 310 511 307" stroke-width="11"/>
<path d="M526 317 L533 350" stroke-width="23"/>
<path d="M556 331 L559.5 351" stroke-width="15"/>
<path d="M592 328 C591 350 589 375 584 394 C581 404 576 411 568 415" stroke-width="17"/>
<path d="M566 419 C550 424 534 416 533.5 402 C533 389 545 381 560 378 C578 374 596 370 609 364" stroke-width="1.8"/>
<path d="M562 416 C548 419 538 412 538 402 C538 392 548 385 560 382" stroke-width="1.4"/>
</g>
<g stroke="url(#gl2)">
<path d="M432.6 294.5 L434 340.5" stroke-width="22.5"/>
<path d="M481.5 293.5 L489 315" stroke-width="21"/>
<path d="M520.5 316.5 L527.5 350" stroke-width="23"/>
<path d="M550 332 L553 349.5" stroke-width="16.5"/>
<path d="M585 327.5 C584.5 345 583.5 368 579 387" stroke-width="20"/><path d="M579 387 C576 397.5 571 406 563 411" stroke-width="18"/>
</g><g stroke="#ffffff" opacity="0.2" filter="url(#fblur)">
<path d="M432.6 294.5 L434 340.5" stroke-width="12.5"/>
<path d="M481.5 293.5 L489 315" stroke-width="11.0"/>
<path d="M520.5 316.5 L527.5 350" stroke-width="13.0"/>
<path d="M550 332 L553 349.5" stroke-width="6.5"/>
<path d="M585 327.5 C584.5 345 583.5 368 579 387" stroke-width="10.0"/><path d="M579 387 C576 397.5 571 406 563 411" stroke-width="8.0"/>
</g>
<g stroke="#fff" stroke-width="0.9" opacity="0.95">
<path d="M352.6 186 L354.6 232"/><path d="M394 182 C391.5 198 389.5 216 388.8 232"/><path d="M428 216 C424.5 220 424 228 425 233"/><path d="M455 228 L454 249"/>
<path d="M429.6 290 L431 332"/><path d="M479.5 289 C482.5 294 485 301 486.5 307"/><path d="M518.5 316 L522 336"/><path d="M548.6 330 L549.4 345"/><path d="M581.5 326 C581 350 579.5 375 574.5 394"/>
</g>
<g stroke="#111" stroke-width="0.75">
<path d="M321 224 C336 222 350 227 366 225.5 C369 225.5 371 225 372 223 C372.5 220 371 219.5 370.5 222 C370.5 224 370.5 226.5 370.8 228 C371.5 225 373.5 224 374.5 226 C375 227.5 377 227.5 379 227.5 C398 228.5 420 229 436 229.5 C437 227 441 226.5 442.5 228.5 C441 231 437.5 231.5 436.5 229.5 M442.5 228 C442.5 230 443.5 231 446 230.8 C460 231.5 480 234 497 230.5"/>
<path d="M391 326.6 C410 330 430 328 445 327 C452 326 455 324 458 325.5 M459.5 325 C459 327 459.5 327.5 461 327 M462.5 325.5 C463.5 324.5 465.5 324.5 467 326 C470 329 473 331 478 332 C500 336 525 340 548 338.5 C552 338 556 337 558.5 333.5 C559 336 559 339.5 562 340 C565 340 566.5 336 566 332 C566.5 338 567.5 345 565 350 C563 354 558 354.5 555.5 351.5 C553.5 348 556 343 561 341.5 C575 338 592 336.5 607 336"/>
</g>
<g fill="#0a0a0a" stroke="none"><circle cx="321" cy="224" r="2.6"/><circle cx="497.4" cy="230.8" r="2.6"/><circle cx="391" cy="326.5" r="2.6"/><circle cx="607" cy="336" r="2.6"/></g>
</g>
</svg></div>
<div class="t" style="left:1082.13px;top:380.32px;color:#fff;font-size:11px">Lớp1</div>
<div style="left:996.49px;top:406.8px;width:347.64px;height:39.35px;background:#585858"></div>
<div style="left:1000.76px;top:421.21px;width:9.07px;height:9.07px;background:#d2d2d2;border-radius:50%"></div>
<div style="left:1029.84px;top:408.67px;width:34.68px;height:35.75px;background-color:#fff;background-image:linear-gradient(45deg,#e6dcdc 25%,transparent 25%,transparent 75%,#e6dcdc 75%),linear-gradient(45deg,#e6dcdc 25%,transparent 25%,transparent 75%,#e6dcdc 75%);background-size:7px 7px;background-position:0 0,3.5px 3.5px;overflow:hidden"><svg width="34.68" height="35.75" viewBox="240 54 440 438.4" style="left:0;top:0"><g fill="none" stroke-linecap="round" stroke-linejoin="round">
<g stroke="#fab0c6" opacity="0.9">
<path d="M364.5 185 L363.5 238" stroke-width="24"/>
<path d="M346 219 C337 224 336 241 344 246 C349 248 352 243 354 237" stroke-width="1.6"/>
<path d="M404 181 C414 171 425 180 419 194 C415 203 408 211 403 223" stroke-width="10"/>
<path d="M401 239 C403 232 405 226 408 220" stroke-width="17"/>
<path d="M440 213 C447 222 446 237 437 242" stroke-width="10"/>
<path d="M464 231 L463 250" stroke-width="17"/>
<path d="M428 184 C432 185 436 188 438.5 191" stroke-width="1.3"/>
</g>
<g stroke="url(#gl1)">
<path d="M358.2 184 L357.3 238.2" stroke-width="24"/>
<path d="M397.5 184 L396.5 198" stroke-width="24.5"/>
<path d="M396.5 198 C395 212 393.5 225 392.8 237.5" stroke-width="20.5"/>
<path d="M437 213.5 C427.5 210.5 421.8 219.5 422.3 228 C422.8 236.5 427 241.5 433.5 240.8" stroke-width="14.5"/>
<path d="M457.3 229 L455.6 250.5" stroke-width="18.5"/>
</g><g stroke="#ffffff" opacity="0.2" filter="url(#fblur)">
<path d="M358.2 184 L357.3 238.2" stroke-width="14.0"/>
<path d="M397.5 184 L396.5 198" stroke-width="14.5"/>
<path d="M396.5 198 C395 212 393.5 225 392.8 237.5" stroke-width="10.5"/>
<path d="M437 213.5 C427.5 210.5 421.8 219.5 422.3 228 C422.8 236.5 427 241.5 433.5 240.8" stroke-width="4.5"/>
<path d="M457.3 229 L455.6 250.5" stroke-width="8.5"/>
</g>
<g stroke="#fab0c6" opacity="0.9">
<path d="M438 295 L439.5 340" stroke-width="22"/>
<path d="M464 288 C460 298 457 309 455 320" stroke-width="7.5"/>
<path d="M468 287 L480 286.5" stroke-width="9"/>
<path d="M486.5 293.5 L494 315" stroke-width="21"/>
<path d="M496 321 C500 315 505 310 511 307" stroke-width="11"/>
<path d="M526 317 L533 350" stroke-width="23"/>
<path d="M556 331 L559.5 351" stroke-width="15"/>
<path d="M592 328 C591 350 589 375 584 394 C581 404 576 411 568 415" stroke-width="17"/>
<path d="M566 419 C550 424 534 416 533.5 402 C533 389 545 381 560 378 C578 374 596 370 609 364" stroke-width="1.8"/>
<path d="M562 416 C548 419 538 412 538 402 C538 392 548 385 560 382" stroke-width="1.4"/>
</g>
<g stroke="url(#gl2)">
<path d="M432.6 294.5 L434 340.5" stroke-width="22.5"/>
<path d="M481.5 293.5 L489 315" stroke-width="21"/>
<path d="M520.5 316.5 L527.5 350" stroke-width="23"/>
<path d="M550 332 L553 349.5" stroke-width="16.5"/>
<path d="M585 327.5 C584.5 345 583.5 368 579 387" stroke-width="20"/><path d="M579 387 C576 397.5 571 406 563 411" stroke-width="18"/>
</g><g stroke="#ffffff" opacity="0.2" filter="url(#fblur)">
<path d="M432.6 294.5 L434 340.5" stroke-width="12.5"/>
<path d="M481.5 293.5 L489 315" stroke-width="11.0"/>
<path d="M520.5 316.5 L527.5 350" stroke-width="13.0"/>
<path d="M550 332 L553 349.5" stroke-width="6.5"/>
<path d="M585 327.5 C584.5 345 583.5 368 579 387" stroke-width="10.0"/><path d="M579 387 C576 397.5 571 406 563 411" stroke-width="8.0"/>
</g>
<g stroke="#fff" stroke-width="0.9" opacity="0.95">
<path d="M352.6 186 L354.6 232"/><path d="M394 182 C391.5 198 389.5 216 388.8 232"/><path d="M428 216 C424.5 220 424 228 425 233"/><path d="M455 228 L454 249"/>
<path d="M429.6 290 L431 332"/><path d="M479.5 289 C482.5 294 485 301 486.5 307"/><path d="M518.5 316 L522 336"/><path d="M548.6 330 L549.4 345"/><path d="M581.5 326 C581 350 579.5 375 574.5 394"/>
</g>
<g stroke="#111" stroke-width="0.75">
<path d="M321 224 C336 222 350 227 366 225.5 C369 225.5 371 225 372 223 C372.5 220 371 219.5 370.5 222 C370.5 224 370.5 226.5 370.8 228 C371.5 225 373.5 224 374.5 226 C375 227.5 377 227.5 379 227.5 C398 228.5 420 229 436 229.5 C437 227 441 226.5 442.5 228.5 C441 231 437.5 231.5 436.5 229.5 M442.5 228 C442.5 230 443.5 231 446 230.8 C460 231.5 480 234 497 230.5"/>
<path d="M391 326.6 C410 330 430 328 445 327 C452 326 455 324 458 325.5 M459.5 325 C459 327 459.5 327.5 461 327 M462.5 325.5 C463.5 324.5 465.5 324.5 467 326 C470 329 473 331 478 332 C500 336 525 340 548 338.5 C552 338 556 337 558.5 333.5 C559 336 559 339.5 562 340 C565 340 566.5 336 566 332 C566.5 338 567.5 345 565 350 C563 354 558 354.5 555.5 351.5 C553.5 348 556 343 561 341.5 C575 338 592 336.5 607 336"/>
</g>
<g fill="#0a0a0a" stroke="none"><circle cx="321" cy="224" r="2.6"/><circle cx="497.4" cy="230.8" r="2.6"/><circle cx="391" cy="326.5" r="2.6"/><circle cx="607" cy="336" r="2.6"/></g>
</g>
</svg></div>
<div class="t" style="left:1082.13px;top:420.41px;color:#fff;font-size:11px">Lớp1</div>
<div style="left:996.49px;top:446.88px;width:347.64px;height:26.95px;background:#585858"></div>
<div style="left:1000.76px;top:461.29px;width:9.07px;height:9.07px;background:#d2d2d2;border-radius:50%"></div>
<div style="left:1029.84px;top:448.75px;width:34.68px;height:25.08px;background:#fff;overflow:hidden"><svg width="34.68" height="35.75" viewBox="240 54 440 438.4" style="left:0;top:0"><rect x="240" y="54" width="440" height="438.4" fill="#fff"/>
<path d="M302 113 C308 102 324 92 344 90.5 C368 89 388 96 405 107 C420 117 436 130 458 132.3 C465 133 472 132.5 478 132 C505 130 528 117 556 113 C585 109 610 120 621 147 C630 170 630 196 622 218 C614 240 604 256 604 285 C604 315 614 345 619 385 C623 415 626 438 620 452 C600 458 575 452 548 438 C525 427 495 416 462 415 C425 416 390 436 350 441 C325 444 296 436 283 415 C272 396 272 366 282 338 C292 312 308 296 309 268 C310 230 298 190 296 160 C295 140 297 124 302 113Z" fill="url(#gb)"/>
<path d="M552 446 L638 452 L638 480 L552 480Z" fill="#fdf1ef" opacity="0.6"/>
</svg></div>
<div class="t" style="left:1082.13px;top:460.49px;color:#fff;font-size:11px">Lớp2</div>
<svg style="left:1323.05px;top:337.5px" width="17" height="17" viewBox="-7 -7 14 14"><g stroke="#fff" stroke-width="2.8"><path d="M0-6.5V6.5M-6.5 0H6.5M-4.6-4.6L4.6 4.6M4.6-4.6L-4.6 4.6"/></g><circle r="4.2" fill="#fff"/><circle r="1.5" fill="#5599d2"/></svg>
<div style="left:1344.66px;top:286.54px;width:21.34px;height:187.29px;background:linear-gradient(to right,#2a2a2a,#383838)"></div>
<div style="left:1347.32px;top:297.48px;width:16.54px;height:160.08px;background:#6c6c6c;border-radius:5px"></div>
<svg style="left:1345.19px;top:286.54px" width="19" height="187.29" viewBox="0 0 19 187" preserveAspectRatio="none"><path d="M9.5 2L14 9H5Z" fill="#b0b0b0"/><path d="M9.5 185L14 178H5Z" fill="#b0b0b0"/></svg>
<div style="left:995.69px;top:474.9px;width:368.18px;height:35.48px;border:1px solid #363636;background:#242424"></div>
<div class="btn" style="left:999.15px;top:479.7px;width:22.41px;height:22.14px;"></div>
<div class="btn" style="left:1025.83px;top:479.7px;width:22.68px;height:22.14px;"></div>
<div class="btn" style="left:1053.18px;top:479.7px;width:22.94px;height:22.14px;"></div>
<div class="btn" style="left:1080.53px;top:479.7px;width:30.01px;height:22.14px;"></div>
<div class="btn" style="left:1114.81px;top:479.7px;width:22.14px;height:22.14px;"></div>
<div class="btn" style="left:1148.56px;top:479.7px;width:22.68px;height:22.14px;"></div>
<div class="btn" style="left:1175.24px;top:479.7px;width:23.34px;height:22.14px;"></div>
<div class="btn" style="left:1210.46px;top:479.7px;width:22.68px;height:22.14px;"></div>
<div style="left:1142.69px;top:484.24px;width:1.07px;height:13.34px;background:#555"></div>
<div style="left:1204.32px;top:484.24px;width:1.07px;height:13.34px;background:#555"></div>
<div class="bl" style="left:993.02px;top:513.85px;width:372.98px;height:1.2px;"></div>
<div class="hdr" style="left:993.02px;top:515.05px;width:372.98px;height:20.28px;"></div>
<div class="t" style="left:1084.53px;top:521.32px;width:160.08px;text-align:center;font-size:10.6px;color:#dadada">Brush Size</div>
<svg style="left:1335.05px;top:519.45px" width="10" height="10" viewBox="0 0 10 10"><path d="M6 2.5H0.8V9.2H7.5V5" fill="none" stroke="#cfcfcf" stroke-width="1.3"/><path d="M6.5 0.5H9.5V3.5M9.5 0.5L6.8 3.2" fill="none" stroke="#cfcfcf" stroke-width="1.2"/></svg>
<svg style="left:1351.86px;top:519.99px" width="9" height="9" viewBox="0 0 9 9"><path d="M1.2 1.2L7.8 7.8M7.8 1.2L1.2 7.8" fill="none" stroke="#e8e8e8" stroke-width="2.3"/></svg>
<div style="left:993.02px;top:534.13px;width:351.64px;height:149.67px;background:#4a4846"></div>
<div style="left:993.55px;top:534.66px;width:39.49px;height:49.22px;background:#555555"></div>
<div class="t" style="left:993.55px;top:574.01px;width:39.49px;text-align:center;font-size:10.2px;color:#fff;transform:scaleX(0.88)">1</div>
<div style="left:1033.9px;top:534.66px;width:39.49px;height:49.22px;background:#555555"></div>
<div class="t" style="left:1033.9px;top:574.01px;width:39.49px;text-align:center;font-size:10.2px;color:#fff;transform:scaleX(0.88)">1.5</div>
<div style="left:1074.26px;top:534.66px;width:39.49px;height:49.22px;background:#555555"></div>
<div class="t" style="left:1074.26px;top:574.01px;width:39.49px;text-align:center;font-size:10.2px;color:#fff;transform:scaleX(0.88)">2</div>
<div style="left:1114.61px;top:534.66px;width:39.49px;height:49.22px;background:#555555"></div>
<div class="t" style="left:1114.61px;top:574.01px;width:39.49px;text-align:center;font-size:10.2px;color:#fff;transform:scaleX(0.88)">3</div>
<div style="left:1154.96px;top:534.66px;width:39.49px;height:49.22px;background:#555555"></div>
<div class="t" style="left:1154.96px;top:574.01px;width:39.49px;text-align:center;font-size:10.2px;color:#fff;transform:scaleX(0.88)">4</div>
<div style="left:1195.32px;top:534.66px;width:39.49px;height:49.22px;background:#555555"></div>
<div class="t" style="left:1195.32px;top:574.01px;width:39.49px;text-align:center;font-size:10.2px;color:#fff;transform:scaleX(0.88)">5</div>
<div style="left:1235.67px;top:534.66px;width:39.49px;height:49.22px;background:#555555"></div>
<div class="t" style="left:1235.67px;top:574.01px;width:39.49px;text-align:center;font-size:10.2px;color:#fff;transform:scaleX(0.88)">7</div>
<div style="left:1276.02px;top:534.66px;width:39.49px;height:49.22px;background:#555555"></div>
<div class="t" style="left:1276.02px;top:574.01px;width:39.49px;text-align:center;font-size:10.2px;color:#fff;transform:scaleX(0.88)">10</div>
<div style="left:993.55px;top:584.82px;width:39.49px;height:49.22px;background:#555555"></div>
<div class="t" style="left:993.55px;top:624.17px;width:39.49px;text-align:center;font-size:10.2px;color:#fff;transform:scaleX(0.88)">12</div>
<div style="left:1033.9px;top:584.82px;width:39.49px;height:49.22px;background:#555555"></div>
<div class="t" style="left:1033.9px;top:624.17px;width:39.49px;text-align:center;font-size:10.2px;color:#fff;transform:scaleX(0.88)">15</div>
<div style="left:1074.26px;top:584.82px;width:39.49px;height:49.22px;background:#555555"></div>
<div class="t" style="left:1074.26px;top:624.17px;width:39.49px;text-align:center;font-size:10.2px;color:#fff;transform:scaleX(0.88)">20</div>
<div style="left:1114.61px;top:584.82px;width:39.49px;height:49.22px;background:#555555"></div>
<div class="t" style="left:1114.61px;top:624.17px;width:39.49px;text-align:center;font-size:10.2px;color:#fff;transform:scaleX(0.88)">25</div>
<div style="left:1154.96px;top:584.82px;width:39.49px;height:49.22px;background:#555555"></div>
<div class="t" style="left:1154.96px;top:624.17px;width:39.49px;text-align:center;font-size:10.2px;color:#fff;transform:scaleX(0.88)">30</div>
<div style="left:1195.32px;top:584.82px;width:39.49px;height:49.22px;background:#555555"></div>
<div class="t" style="left:1195.32px;top:624.17px;width:39.49px;text-align:center;font-size:10.2px;color:#fff;transform:scaleX(0.88)">40</div>
<div style="left:1235.67px;top:584.82px;width:39.49px;height:49.22px;background:#555555"></div>
<div class="t" style="left:1235.67px;top:624.17px;width:39.49px;text-align:center;font-size:10.2px;color:#fff;transform:scaleX(0.88)">50</div>
<div style="left:1276.02px;top:584.82px;width:39.49px;height:49.22px;background:#555555"></div>
<div class="t" style="left:1276.02px;top:624.17px;width:39.49px;text-align:center;font-size:10.2px;color:#fff;transform:scaleX(0.88)">70</div>
<div style="left:993.55px;top:634.98px;width:39.49px;height:49.22px;background:#555555"></div>
<div class="t" style="left:993.55px;top:674.33px;width:39.49px;text-align:center;font-size:10.2px;color:#fff;transform:scaleX(0.88)">100</div>
<div style="left:1033.9px;top:634.98px;width:39.49px;height:49.22px;background:#555555"></div>
<div class="t" style="left:1033.9px;top:674.33px;width:39.49px;text-align:center;font-size:10.2px;color:#fff;transform:scaleX(0.88)">150</div>
<div style="left:1074.26px;top:634.98px;width:39.49px;height:49.22px;background:#555555"></div>
<div class="t" style="left:1074.26px;top:674.33px;width:39.49px;text-align:center;font-size:10.2px;color:#fff;transform:scaleX(0.88)">200</div>
<div style="left:1114.61px;top:634.98px;width:39.49px;height:49.22px;background:#555555"></div>
<div class="t" style="left:1114.61px;top:674.33px;width:39.49px;text-align:center;font-size:10.2px;color:#fff;transform:scaleX(0.88)">300</div>
<div style="left:1154.96px;top:634.98px;width:39.49px;height:49.22px;background:#555555"></div>
<div class="t" style="left:1154.96px;top:674.33px;width:39.49px;text-align:center;font-size:10.2px;color:#fff;transform:scaleX(0.88)">400</div>
<div style="left:1195.32px;top:634.98px;width:39.49px;height:49.22px;background:#555555"></div>
<div class="t" style="left:1195.32px;top:674.33px;width:39.49px;text-align:center;font-size:10.2px;color:#fff;transform:scaleX(0.88)">500</div>
<div style="left:1235.67px;top:634.98px;width:39.49px;height:49.22px;background:#555555"></div>
<div class="t" style="left:1235.67px;top:674.33px;width:39.49px;text-align:center;font-size:10.2px;color:#fff;transform:scaleX(0.88)">700</div>
<div style="left:1276.02px;top:634.98px;width:39.49px;height:49.22px;background:#555555"></div>
<div class="t" style="left:1276.02px;top:674.33px;width:39.49px;text-align:center;font-size:10.2px;color:#fff;transform:scaleX(0.88)">1000</div>
<svg style="left:992.48px;top:533.59px" width="352.17" height="150.74" viewBox="744 400 264 113"><circle cx="759.60" cy="415.40" r="0.20" fill="#ededed" opacity="0.5"/><circle cx="789.85" cy="415.40" r="0.35" fill="#ededed" opacity="0.5"/><circle cx="820.10" cy="415.40" r="0.60" fill="#ededed" opacity="0.5"/><circle cx="850.35" cy="415.40" r="0.90" fill="#ededed" opacity="1"/><circle cx="880.60" cy="415.40" r="1.30" fill="#ededed" opacity="1"/><circle cx="910.85" cy="415.40" r="1.60" fill="#ededed" opacity="1"/><circle cx="941.10" cy="415.40" r="2.50" fill="#ededed" opacity="1"/><circle cx="971.35" cy="415.40" r="3.70" fill="#ededed" opacity="1"/><circle cx="759.60" cy="454.70" r="4.40" fill="#ededed" opacity="1"/><circle cx="789.85" cy="454.70" r="5.50" fill="#ededed" opacity="1"/><circle cx="820.10" cy="454.70" r="7.50" fill="#ededed" opacity="1"/><circle cx="850.35" cy="454.70" r="9.20" fill="#ededed" opacity="1"/><circle cx="880.60" cy="454.70" r="9.20" fill="#ededed" opacity="1"/><circle cx="910.85" cy="454.70" r="9.20" fill="#ededed" opacity="1"/><circle cx="941.10" cy="454.70" r="9.20" fill="#ededed" opacity="1"/><circle cx="971.35" cy="454.70" r="9.20" fill="#ededed" opacity="1"/><circle cx="759.60" cy="492.30" r="9.20" fill="#ededed" opacity="1"/><circle cx="789.85" cy="492.30" r="9.20" fill="#ededed" opacity="1"/><circle cx="820.10" cy="492.30" r="9.20" fill="#ededed" opacity="1"/><circle cx="850.35" cy="492.30" r="9.20" fill="#ededed" opacity="1"/><circle cx="880.60" cy="492.30" r="9.20" fill="#ededed" opacity="1"/><circle cx="910.85" cy="492.30" r="9.20" fill="#ededed" opacity="1"/><circle cx="941.10" cy="492.30" r="9.20" fill="#ededed" opacity="1"/><circle cx="971.35" cy="492.30" r="9.20" fill="#ededed" opacity="1"/></svg>
<div style="left:1344.66px;top:534.13px;width:21.34px;height:149.67px;background:linear-gradient(to right,#2a2a2a,#383838)"></div>
<div style="left:1347.32px;top:545.6px;width:16.54px;height:130.06px;background:#6c6c6c;border-radius:5px"></div>
<svg style="left:1345.19px;top:534.13px" width="19" height="149.67" viewBox="0 0 19 150" preserveAspectRatio="none"><path d="M9.5 2L14 9H5Z" fill="#b0b0b0"/><path d="M9.5 148L14 141H5Z" fill="#b0b0b0"/></svg>
<div style="left:0px;top:686.47px;width:1366px;height:17.34px;background:#272727"></div>
<svg style="left:12.01px;top:24.01px" width="24" height="24" viewBox="0 0 24 24"><g fill="#7eaee8"><circle cx="10.6" cy="9.9" r="5"/><circle cx="7" cy="13.8" r="3.8"/><circle cx="15.6" cy="13.2" r="4.3"/><rect x="7" y="12" width="8.6" height="5.6"/></g><path d="M7.6 11.6L10.4 14.3L15 8.8" fill="none" stroke="#fff" stroke-width="2"/></svg>
<svg style="left:39.09px;top:24.01px" width="24" height="24" viewBox="0 0 24 24"><path d="M8.5 9.5H5.5V19.5H18.5V9.5H15.5" fill="none" stroke="#ececec" stroke-width="1.6" stroke-width="2"/><path d="M12 15V5M8.5 8L12 4.2L15.5 8" fill="none" stroke="#ececec" stroke-width="1.6" stroke-width="2"/></svg>
<svg style="left:66.03px;top:24.01px" width="24" height="24" viewBox="0 0 24 24"><path d="M11.5 5.8C16 5.8 19.6 7.8 19.6 10.6C19.6 13.4 16.4 15.2 12.4 15.4L9.6 18V15.1C5.8 14.5 3.4 12.8 3.4 10.6C3.4 7.8 7 5.8 11.5 5.8Z" fill="#ececec"/><circle cx="9" cy="10.5" r="1.7" fill="none" stroke="#8a8a8a" stroke-width="0.8"/><circle cx="14" cy="10.5" r="1.7" fill="none" stroke="#8a8a8a" stroke-width="0.8"/></svg>
<svg style="left:93.11px;top:24.01px" width="24" height="24" viewBox="0 0 24 24"><path d="M3.5 5H20.5V16.5H14L12 19L10 16.5H3.5Z" fill="#ececec"/><path d="M6.5 8.5H17.5M6.5 12H13" stroke="#555" stroke-width="1.8"/></svg>
<svg style="left:120.06px;top:24.01px" width="24" height="24" viewBox="0 0 24 24"><path d="M6 4.6H13.6L17.6 8.6V19H6Z" fill="none" stroke="#ececec" stroke-width="1.6"/><path d="M8.5 10.2H15.2M8.5 13H15.2M8.5 15.8H15.2" stroke="#ececec" stroke-width="1.5"/></svg>
<svg style="left:147.14px;top:24.01px" width="24" height="24" viewBox="0 0 24 24"><path d="M4 4.5H20V17H11M4 4.5V12M4 8.5H20M8.5 4.5V11M11 12.8H20" fill="none" stroke="#ececec" stroke-width="1.6" stroke-width="1.4"/><circle cx="7.5" cy="16.5" r="3.6" fill="none" stroke="#ececec" stroke-width="1.6" stroke-width="1.4"/><path d="M7.5 14.5V16.7L9 17.5" fill="none" stroke="#ececec" stroke-width="1.6" stroke-width="1"/></svg>
<svg style="left:174.08px;top:24.01px" width="24" height="24" viewBox="0 0 24 24"><path d="M3.4 7H8.6V10.4H3.4ZM3.4 11.4H8.6V14.8H3.4ZM3.4 15.8H8.6V19.2H3.4ZM9.6 11.4H14.8V14.8H9.6ZM9.6 15.8H14.8V19.2H9.6Z" fill="#ececec"/><path d="M9.6 7H12.5L9.6 10.4Z" fill="#ececec"/><path d="M11 10.8L16.2 4.6L18 6.2L12.8 12.2Z" fill="#c4c4c4"/></svg>
<svg style="left:213.44px;top:24.01px" width="32" height="24" viewBox="0 0 32 24"><path d="M7.3 10.5L14.2 5V8.3C20.5 8.3 24.8 11 26 16.2C23 13.6 19.2 12.7 14.2 12.9V16Z" fill="#ececec"/></svg>
<svg style="left:249.46px;top:24.01px" width="32" height="24" viewBox="0 0 32 24"><path d="M24 10.5L17.1 5V8.3C10.8 8.3 6.5 11 5.3 16.2C8.3 13.6 12.1 12.7 17.1 12.9V16Z" fill="#ececec"/></svg>
<svg style="left:296.14px;top:24.01px" width="24" height="24" viewBox="0 0 24 24"><circle cx="12" cy="12" r="7.6" fill="none" stroke="#a9d2f5" stroke-width="1.8"/><path d="M6.6 6.6L17.4 17.4" stroke="#a9d2f5" stroke-width="1.8"/></svg>
<svg style="left:324.16px;top:24.01px" width="24" height="24" viewBox="0 0 24 24"><path d="M5 5.5L19 6.8M5 8.2L19 9M5 11L19 11.3M5 13.8L19 13.5M5 16.5L19 15.8M5 19.2L19 18" stroke="#bdbdbd" stroke-width="1.3"/></svg>
<svg style="left:351.1px;top:24.01px" width="24" height="24" viewBox="0 0 24 24"><path d="M5.5 5.5H18.5V18.5H5.5Z" fill="#bdbdbd"/><path d="M9.8 5V19M14.2 5V19M5 9.8H19M5 14.2H19" stroke="#7c7c7c" stroke-width="1"/></svg>
<svg style="left:378.18px;top:24.01px" width="24" height="24" viewBox="0 0 24 24"><path d="M19.5 5L5 12L19.5 19M5 12L19.5 8.5M5 12H19.5M5 12L19.5 15.5" fill="none" stroke="#bdbdbd" stroke-width="1.5"/></svg>
<svg style="left:405.13px;top:24.01px" width="24" height="24" viewBox="0 0 24 24"><path d="M12 4V20M4 12H20M6 6L18 18M18 6L6 18" stroke="#ececec" stroke-width="1.9"/><circle cx="12" cy="12" r="2.6" fill="#494949"/></svg>
<svg style="left:432.21px;top:24.01px" width="24" height="24" viewBox="0 0 24 24"><circle cx="12" cy="12" r="2" fill="none" stroke="#bdbdbd" stroke-width="1.1"/><circle cx="12" cy="12" r="4.6" fill="none" stroke="#bdbdbd" stroke-width="1.1"/><circle cx="12" cy="12" r="7.4" fill="none" stroke="#bdbdbd" stroke-width="1.1"/></svg>
<svg style="left:459.16px;top:24.01px" width="24" height="24" viewBox="0 0 24 24"><path d="M6 6C14 4 15 10 11.5 12.5C8 15 12 20 18.5 18.5" fill="none" stroke="#bdbdbd" stroke-width="1.8"/><circle cx="6" cy="6" r="2" fill="#ececec"/><circle cx="18.5" cy="18.5" r="2" fill="#ececec"/></svg>
<svg style="left:486.24px;top:24.01px" width="24" height="24" viewBox="0 0 24 24"><circle cx="12" cy="12" r="7" fill="none" stroke="#ececec" stroke-width="2.2" stroke-dasharray="4.2 1.3"/></svg>
<svg style="left:513.32px;top:24.01px" width="24" height="24" viewBox="0 0 24 24"><circle cx="12" cy="12" r="6.4" fill="none" stroke="#bdbdbd" stroke-width="2.6" stroke-dasharray="2.6 2.43"/><circle cx="12" cy="12" r="5.4" fill="none" stroke="#bdbdbd" stroke-width="1.5"/><circle cx="12" cy="12" r="2.6" fill="none" stroke="#bdbdbd" stroke-width="1.3"/></svg>
<svg style="left:4px;top:62.7px" width="28" height="28" viewBox="0 0 28 28"><path d="M23 5.5L12 15.5" stroke="#fff" stroke-width="2.2" stroke-linecap="round"/><path d="M12.8 17C12.8 20 9.5 22.5 4.5 21.5C6 20.5 5.5 18 7 16.2C8.8 14.2 12.8 14.5 12.8 17Z" fill="#fff"/></svg>
<svg style="left:4px;top:93.65px" width="28" height="28" viewBox="0 0 28 28"><path d="M15 5.6L22.6 11.9L11.8 22L4.2 15.7Z" fill="none" stroke="#ececec" stroke-width="1.7" stroke-linejoin="round"/><path d="M4.2 15.7L11.8 22L14.6 19.4L7 13Z" fill="#ececec"/></svg>
<svg style="left:4px;top:124.73px" width="28" height="28" viewBox="0 0 28 28"><rect x="7" y="7" width="14" height="14" fill="none" stroke="#bdbdbd" stroke-width="1.8"/></svg>
<svg style="left:4px;top:155.68px" width="28" height="28" viewBox="0 0 28 28"><path d="M22 7.5L14 15.5" stroke="#ececec" stroke-width="3.6"/><path d="M14.8 12.2L17.3 14.7L12.2 17.8Z" fill="#ececec"/><rect x="3" y="12" width="2.7" height="2.7" fill="#ececec"/><rect x="6.7" y="15.7" width="2.7" height="2.7" fill="#ececec"/><rect x="10" y="19" width="2.7" height="2.7" fill="#ececec"/></svg>
<svg style="left:4px;top:194.09px" width="28" height="28" viewBox="0 0 28 28"><path d="M13 5V23M4 14H22" stroke="#ececec" stroke-width="1.8"/><path d="M13 3L16.2 7.5H9.8ZM13 25L16.2 20.5H9.8ZM2 14L6.5 10.8V17.2ZM24 14L19.5 10.8V17.2Z" fill="#ececec"/></svg>
<svg style="left:4px;top:232.78px" width="28" height="28" viewBox="0 0 28 28"><rect x="6.3" y="6.8" width="13.8" height="13.4" fill="#e6e6e6"/></svg>
<svg style="left:4px;top:263.73px" width="28" height="28" viewBox="0 0 28 28"><path d="M3 15.9L15 10.5L19.4 15.9L10.6 23Z" fill="#ececec"/><path d="M6 13.8L14.6 10.3L17.6 14.5Z" fill="#5a5a5a"/><path d="M6 13C4.5 7 9 2.5 11 5.5C12 7 12.6 8.5 13 10" fill="none" stroke="#ececec" stroke-width="1.6"/><path d="M19.4 15.9C22.5 16.5 23 20 22 22.6C20.5 21 20 18 19.4 15.9Z" fill="#ececec"/></svg>
<svg style="left:4px;top:294.81px" width="28" height="28" viewBox="0 0 28 28"><rect x="3.6" y="5.6" width="19.2" height="15.2" fill="url(#gtool)" stroke="#ececec" stroke-width="1.3"/></svg>
<svg style="left:4px;top:333.5px" width="28" height="28" viewBox="0 0 28 28"><rect x="6.6" y="6.6" width="13.2" height="13" fill="none" stroke="#bdbdbd" stroke-width="1.6" stroke-dasharray="2 2"/></svg>
<svg style="left:4px;top:364.44px" width="28" height="28" viewBox="0 0 28 28"><path d="M4.5 19.5C1.5 15.5 7 12.5 10.5 10.5C14 8.5 17 4.5 20.5 7.5C24 11 20.5 16.5 16 19.5C11.5 22.5 7 22.5 4.5 19.5Z" fill="none" stroke="#bdbdbd" stroke-width="1.6" stroke-dasharray="2 2"/></svg>
<svg style="left:4px;top:395.53px" width="28" height="28" viewBox="0 0 28 28"><path d="M7 19.5L15.5 11" stroke="#ececec" stroke-width="3"/><path d="M17.8 4.5V7.5M21.5 9H18.8M21 5.5L19 7.5M15 5.8L16.5 7.8M21 12L19 10.5" stroke="#bdbdbd" stroke-width="1.2"/></svg>
<svg style="left:4px;top:426.47px" width="28" height="28" viewBox="0 0 28 28"><path d="M5.5 6.5H13M5.5 6.5V20H19.5V14" fill="none" stroke="#bdbdbd" stroke-width="1.6" stroke-dasharray="2 2"/><path d="M21.8 6L13.5 14.2" stroke="#ececec" stroke-width="3.2"/><path d="M11.5 16.5L12.3 13L14.8 15.5Z" fill="#ececec"/></svg>
<svg style="left:4px;top:457.82px" width="28" height="28" viewBox="0 0 28 28"><path d="M5.5 9V20.5H19" fill="none" stroke="#bdbdbd" stroke-width="1.6" stroke-dasharray="2 2"/><path d="M16 5L22 10L15.5 17L9.5 12Z" fill="none" stroke="#ececec" stroke-width="1.5" stroke-linejoin="round"/><path d="M9.5 12L15.5 17L17.6 14.8L11.6 9.8Z" fill="#ececec"/></svg>
<svg style="left:4px;top:495.71px" width="28" height="28" viewBox="0 0 28 28"><text x="13.4" y="20.8" text-anchor="middle" font-family="Liberation Serif, serif" font-weight="bold" font-size="23.5" fill="#ececec">T</text></svg>
<svg style="left:4px;top:526.66px" width="28" height="28" viewBox="0 0 28 28"><path d="M4 9.5L9 5.7L14 8L13 13L7 15Z" fill="none" stroke="#ececec" stroke-width="1.5"/><path d="M12 11.5L20.6 15.8L16.6 17L15.4 21Z" fill="#ececec"/></svg>
<svg style="left:4px;top:557.87px" width="28" height="28" viewBox="0 0 28 28"><path d="M4.5 19.5L15.5 9L19 12.5L10.5 19.5Z" fill="#ececec"/><path d="M16.5 8L18.7 5.8C20.3 4.3 23 6.8 21.5 8.5L20 11.5Z" fill="#ececec"/><path d="M7 18.5L13 13" stroke="#494949" stroke-width="1"/></svg>
<svg style="left:4px;top:596.29px" width="28" height="28" viewBox="0 0 28 28"><path d="M6 22L7 18.5L15.5 10L18 12.5L9.5 21Z" fill="none" stroke="#ececec" stroke-width="1.7"/><path d="M14.5 8.5L19.5 13.5M16.5 10.5L20 6C21.5 4.5 23.7 6.6 22.2 8.2L18.2 12Z" fill="#ececec" stroke="#ececec" stroke-width="1.6"/></svg>
<svg style="left:4px;top:627.37px" width="28" height="28" viewBox="0 0 28 28"><path d="M8.5 24C6.5 21 4.5 17.5 3.5 15C3.2 13.5 5 13 6 14.5L8 17.5V7.5C8 5.8 10.4 5.8 10.4 7.5V5.5C10.4 3.8 12.9 3.8 12.9 5.5V5C12.9 3.3 15.4 3.3 15.4 5V6.5C15.4 4.8 17.9 4.8 17.9 6.5V9.5C17.9 8 20.3 8 20.3 9.5V17C20.3 20 19.5 22 18.5 24Z" fill="#ececec"/><path d="M10.4 7.5V13M12.9 5.5V13M15.4 6.5V13M17.9 9.5V13.5" stroke="#494949" stroke-width="0.9"/></svg>
<svg style="left:45.36px;top:193.43px" width="23" height="13" viewBox="0 0 23 13"><path d="M11.5 2.5C15 2.5 16.5 5 15 6.5C13.5 7.5 15 9 16 9.5C14.5 11.5 8 11.5 8 7C8 4.5 9.5 2.5 11.5 2.5Z" fill="#ececec"/></svg>
<svg style="left:72.3px;top:193.43px" width="23" height="13" viewBox="0 0 23 13"><path d="M10 2.5C13 2 15 4 14 6C16.5 6.5 16.5 10.5 13.5 10.8C12 11 10.5 9.5 11 8C9 8.5 7 6.5 7.6 4.6C8 3.4 9 2.7 10 2.5Z" fill="#ececec"/></svg>
<svg style="left:41.62px;top:271.2px" width="23" height="23" viewBox="0 0 23 23"><path d="M5.8 4.2H13L17 8.2V18.2H5.8Z" fill="none" stroke="#ececec" stroke-width="1.5"/><path d="M12.6 4.2V8.6H17" fill="none" stroke="#ececec" stroke-width="1.1"/></svg>
<svg style="left:68.7px;top:271.2px" width="23" height="23" viewBox="0 0 23 23"><path d="M6 7.8H17V18.4H6Z" fill="none" stroke="#ececec" stroke-width="1.7"/><path d="M9.7 7.8V18M13.3 7.8V18" stroke="#ececec" stroke-width="1.6"/><path d="M5 6.6H18M9.3 4.8H13.7" stroke="#ececec" stroke-width="1.7"/></svg>
<svg style="left:41.35px;top:658.59px" width="23" height="23" viewBox="0 0 23 23"><path d="M7 13.5C3.5 13.5 3 9.5 6 8.5C6 4.5 11 3 13 6C16.5 4.5 19 8 17.5 10C20 10.5 19.5 13.5 17 13.5H14.5V11L11.5 8L8.5 11V13.5Z" fill="#ececec"/><path d="M11.5 9.5L15 13.5H13V16H10V13.5H8ZM11.5 21L8 17H15Z" fill="#ececec"/></svg>
<svg style="left:68.43px;top:658.59px" width="23" height="23" viewBox="0 0 23 23"><path d="M5.8 4.2H13L17 8.2V18.2H5.8Z" fill="none" stroke="#ececec" stroke-width="1.5"/><path d="M12.6 4.2V8.6H17" fill="none" stroke="#ececec" stroke-width="1.1"/></svg>
<svg style="left:95.65px;top:658.59px" width="30" height="23" viewBox="0 0 (30, 23) (30, 23)"><path d="M4 3.5H11.5L15.5 7.5V19.5H4Z" fill="none" stroke="#bdbdbd" stroke-width="1.5"/><path d="M6.5 10H10V13.5H6.5ZM10 13.5H13.5V17H10Z" fill="#ececec"/><path d="M19 9.5H26L22.5 14Z" fill="#ececec"/></svg>
<svg style="left:129.4px;top:658.59px" width="23" height="23" viewBox="0 0 23 23"><path d="M6 3.5H13.5L17.5 7.5V19.5H6Z" fill="none" stroke="#bdbdbd" stroke-width="1.5"/><path d="M8.5 9H14.5V17H8.5Z" fill="none" stroke="#bdbdbd" stroke-width="1.1"/><text x="11.5" y="16" text-anchor="middle" font-size="8" font-weight="bold" fill="#bdbdbd" font-family="Liberation Sans, sans-serif">S</text></svg>
<svg style="left:156.74px;top:658.59px" width="23" height="23" viewBox="0 0 23 23"><path d="M4.6 5.6H10L11.4 7.4H18.4V17.6H4.6Z" fill="#ececec"/></svg>
<svg style="left:183.96px;top:658.59px" width="23" height="23" viewBox="0 0 23 23"><path d="M8.5 4.5H18.5V14.5H8.5Z" fill="none" stroke="#bdbdbd" stroke-width="1.4"/><path d="M5 8H15V18.5H5Z" fill="#494949" stroke="#bdbdbd" stroke-width="1.4"/></svg>
<svg style="left:217.71px;top:658.59px" width="23" height="23" viewBox="0 0 23 23"><path d="M6 7.8H17V18.4H6Z" fill="none" stroke="#ececec" stroke-width="1.7"/><path d="M9.7 7.8V18M13.3 7.8V18" stroke="#ececec" stroke-width="1.6"/><path d="M5 6.6H18M9.3 4.8H13.7" stroke="#ececec" stroke-width="1.7"/></svg>
<svg style="left:996.49px;top:77.37px" width="24" height="24" viewBox="0 0 24 24"><circle cx="9" cy="9.6" r="4.5" fill="none" stroke="#ececec" stroke-width="1.6"/><path d="M12.4 13L16.8 17.2" stroke="#ececec" stroke-width="2.2"/><path d="M8 8.3L9.4 7.4V12" fill="none" stroke="#ececec" stroke-width="1.3"/></svg>
<svg style="left:1030.9px;top:77.37px" width="24" height="24" viewBox="0 0 24 24"><circle cx="9" cy="9.6" r="4.5" fill="none" stroke="#ececec" stroke-width="1.6"/><path d="M12.4 13L16.8 17.2" stroke="#ececec" stroke-width="2.2"/><path d="M6.8 9.6H11.2M9 7.4V11.8" stroke="#ececec" stroke-width="1.6"/></svg>
<svg style="left:1057.85px;top:77.37px" width="24" height="24" viewBox="0 0 24 24"><rect x="4.6" y="4.8" width="14" height="12" fill="none" stroke="#bdbdbd" stroke-width="1.2"/><path d="M5.5 5.5L9.5 9M17.5 5.5L13.5 9M5.5 16L9.5 12.6M17.5 16L13.5 12.6" stroke="#bdbdbd" stroke-width="1.4"/><path d="M10.3 7V9.8H7.5ZM12.8 7V9.8H15.6ZM10.3 14.6V11.8H7.5ZM12.8 14.6V11.8H15.6Z" fill="#bdbdbd"/></svg>
<svg style="left:1085.33px;top:77.37px" width="24" height="24" viewBox="0 0 24 24"><circle cx="9" cy="9.6" r="4.5" fill="none" stroke="#ececec" stroke-width="1.6"/><path d="M12.4 13L16.8 17.2" stroke="#ececec" stroke-width="2.2"/><path d="M6.8 9.6H11.2" stroke="#ececec" stroke-width="1.6"/></svg>
<svg style="left:1118.95px;top:77.37px" width="24" height="24" viewBox="0 0 24 24"><path d="M7.5 6.5A7 7 0 1 0 15 5.6" fill="none" stroke="#bdbdbd" stroke-width="1.8"/><path d="M9.5 3L6 6.5L10.5 8.2Z" fill="#bdbdbd"/><path d="M8.5 10.5L14.5 8.5L16 13.5L10 15.5Z" fill="#ececec"/></svg>
<svg style="left:1146.96px;top:77.37px" width="24" height="24" viewBox="0 0 24 24"><rect x="7.5" y="8" width="9" height="8" fill="#ececec"/><path d="M3.5 4.5L7 7.5M20.5 4.5L17 7.5M3.5 19.5L7 16.5M20.5 19.5L17 16.5" stroke="#ececec" stroke-width="1.5"/><path d="M3 4L6.5 4.5L4 7ZM21 4L17.5 4.5L20 7ZM3 20L6.5 19.5L4 17ZM21 20L17.5 19.5L20 17Z" fill="#ececec"/></svg>
<svg style="left:1173.91px;top:77.37px" width="24" height="24" viewBox="0 0 24 24"><path d="M16.5 6.5A7 7 0 1 1 9 5.6" fill="none" stroke="#bdbdbd" stroke-width="1.8"/><path d="M14.5 3L18 6.5L13.5 8.2Z" fill="#bdbdbd"/><path d="M9.5 8.5L15.5 10.5L14 15.5L8 13.5Z" fill="#bdbdbd"/></svg>
<svg style="left:1208.06px;top:77.37px" width="24" height="24" viewBox="0 0 24 24"><rect x="4.5" y="9" width="6" height="9" fill="#ececec"/><rect x="14" y="9.5" width="5" height="8" fill="none" stroke="#bdbdbd" stroke-width="1.3"/><path d="M12 5.5V20" stroke="#bdbdbd" stroke-width="1.2"/><path d="M7.5 7C9 3.5 15 3.5 16.5 7" fill="none" stroke="#bdbdbd" stroke-width="1.3"/></svg>
<svg style="left:999.15px;top:479.43px" width="23" height="23" viewBox="0 0 23 23"><path d="M5.8 4.2H13L17 8.2V18.2H5.8Z" fill="none" stroke="#ececec" stroke-width="1.5"/><path d="M12.6 4.2V8.6H17" fill="none" stroke="#ececec" stroke-width="1.1"/></svg>
<svg style="left:1025.83px;top:479.43px" width="23" height="23" viewBox="0 0 23 23"><path d="M5.8 4.2H13L17 8.2V18.2H5.8Z" fill="none" stroke="#bdbdbd" stroke-width="1.5"/><text x="11.4" y="16.4" text-anchor="middle" font-size="8.5" font-weight="bold" fill="#ececec" font-family="Liberation Sans, sans-serif">8</text></svg>
<svg style="left:1053.18px;top:479.43px" width="23" height="23" viewBox="0 0 23 23"><path d="M5.8 4.2H13L17 8.2V18.2H5.8Z" fill="none" stroke="#bdbdbd" stroke-width="1.5"/><text x="11.4" y="16.4" text-anchor="middle" font-size="8.5" font-weight="bold" fill="#ececec" font-family="Liberation Sans, sans-serif">1</text></svg>
<svg style="left:1080.53px;top:479.43px" width="30" height="23" viewBox="0 0 (30, 23) (30, 23)"><path d="M4 3.5H10.5L14 7V16.5H4Z" fill="none" stroke="#bdbdbd" stroke-width="1.4"/><path d="M8.5 16.5H16M12.2 12.8V20.2" stroke="#ececec" stroke-width="2"/><path d="M20 9.5H27L23.5 14Z" fill="#ececec"/></svg>
<svg style="left:1114.81px;top:479.43px" width="23" height="23" viewBox="0 0 23 23"><path d="M4.6 5.6H10L11.4 7.4H18.4V17.6H4.6Z" fill="#ececec"/></svg>
<svg style="left:1148.56px;top:479.43px" width="23" height="23" viewBox="0 0 23 23"><path d="M8.5 4.5H18.5V14.5H8.5Z" fill="none" stroke="#bdbdbd" stroke-width="1.3" stroke-dasharray="1.5 1"/><path d="M5 8H15V18.5H5Z" fill="#494949" stroke="#ececec" stroke-width="1.4"/></svg>
<svg style="left:1175.77px;top:479.43px" width="23" height="23" viewBox="0 0 23 23"><path d="M4.5 5H9.5V9H4.5ZM4.5 13.5H9.5V18H4.5Z" fill="#ececec"/><path d="M9.5 7H12V16H9.5M12 11.5H14" fill="none" stroke="#bdbdbd" stroke-width="1.3"/><path d="M14 8.5H19.5V14.5H14Z" fill="#ececec"/></svg>
<svg style="left:1210.46px;top:479.43px" width="23" height="23" viewBox="0 0 23 23"><path d="M6 7.8H17V18.4H6Z" fill="none" stroke="#ececec" stroke-width="1.7"/><path d="M9.7 7.8V18M13.3 7.8V18" stroke="#ececec" stroke-width="1.6"/><path d="M5 6.6H18M9.3 4.8H13.7" stroke="#ececec" stroke-width="1.7"/></svg>
</div>
</body></html>
